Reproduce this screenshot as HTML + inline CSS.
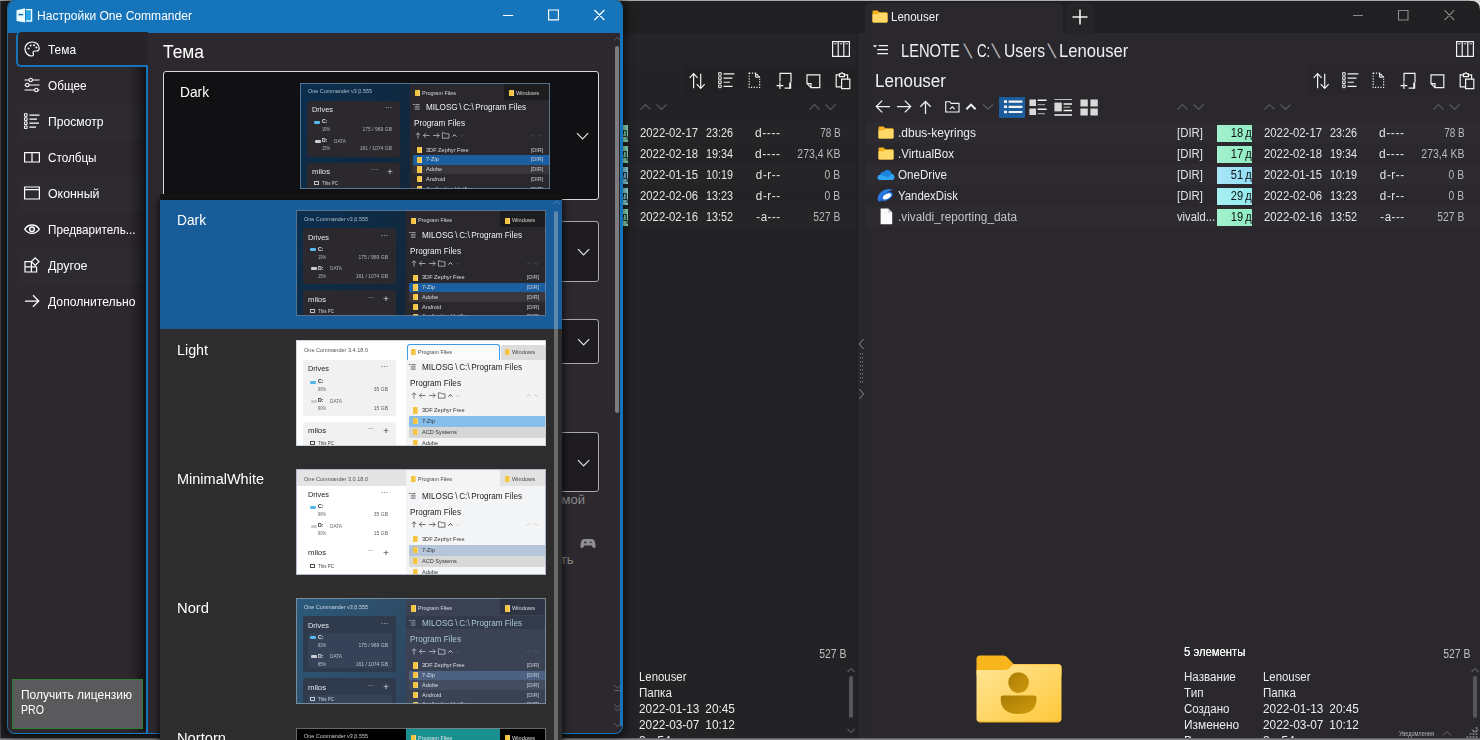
<!DOCTYPE html>
<html lang="ru"><head><meta charset="utf-8"><title>Настройки One Commander</title>
<style>
html,body{margin:0;padding:0;background:#201f21;}
body{width:1480px;height:740px;overflow:hidden;position:relative;font-family:"Liberation Sans", sans-serif;}
.b{position:absolute;box-sizing:border-box;}
.t{position:absolute;white-space:nowrap;display:inline-block;}
.layer{position:absolute;left:0;top:0;width:1480px;height:740px;overflow:hidden;}
.th{position:absolute;overflow:hidden;box-sizing:border-box;width:250px;height:106px;font-size:6px;}
.th .t{filter:blur(0.3px);}
.t i{font-style:normal;color:#a8a7ab;}
</style></head>
<body>
<div class="layer" id="main"><div class="b" style="left:0px;top:0px;width:1480px;height:740px;background:#201f21;"></div><div class="b" style="left:0px;top:0px;width:1px;height:740px;background:#454347;"></div><div class="b" style="left:622px;top:0;width:236px;height:740px;overflow:hidden;"><div class="b" style="left:-622px;top:0;width:1480px;height:740px;"><div class="b" style="left:241.5px;top:33px;width:614.5px;height:706px;background:#232225;"></div><div class="b" style="left:241.5px;top:33px;width:614.5px;height:32px;background:#252428;"></div><svg class="b" style="left:248px;top:44px;" width="18" height="12" viewBox="0 0 18 12" fill="none"><path d="M0.8 1.2 H5.2 L3 3.6Z" fill="#f2f2f2"/><path d="M6.6 1.6 H16 M5.2 5.6 H16 M5.2 9.6 H16" stroke="#f2f2f2" stroke-width="1.15"/></svg><span class="t" id="t0" style="top:37.5px;font-size:19px;line-height:25px;color:#f0f0f0;left:277.4px;transform-origin:0 50%;transform:scaleX(0.7734);">LENOTE</span><span class="t" id="t1" style="top:38.4px;font-size:20px;line-height:26px;color:#b4b3b7;left:341.20000000000005px;transform-origin:0 50%;transform:skewX(15deg);">\</span><span class="t" id="t2" style="top:37.5px;font-size:19px;line-height:25px;color:#f0f0f0;left:352.6px;transform-origin:0 50%;transform:scaleX(0.7000);">C:</span><span class="t" id="t3" style="top:38.4px;font-size:20px;line-height:26px;color:#b4b3b7;left:368.79999999999995px;transform-origin:0 50%;transform:skewX(15deg);">\</span><span class="t" id="t4" style="top:37.5px;font-size:19px;line-height:25px;color:#f0f0f0;left:380px;transform-origin:0 50%;transform:scaleX(0.8262);">Users</span><span class="t" id="t5" style="top:38.4px;font-size:20px;line-height:26px;color:#b4b3b7;left:425.20000000000005px;transform-origin:0 50%;transform:skewX(15deg);">\</span><span class="t" id="t6" style="top:37.5px;font-size:19px;line-height:25px;color:#f0f0f0;left:434.70000000000005px;transform-origin:0 50%;transform:scaleX(0.8746);">Lenouser</span><svg class="b" style="left:832px;top:41px;" width="18" height="16" viewBox="0 0 18 16" fill="none"><rect x="0.6" y="0.6" width="16.8" height="14.8" stroke="#f2f2f2" stroke-width="1.2"/><path d="M6.2 0.6 V15.4 M11.8 0.6 V15.4" stroke="#f2f2f2" stroke-width="1.2"/><path d="M2.2 2.8 H4.6 M7.8 2.8 H10.2 M13.4 2.8 H15.8" stroke="#f2f2f2" stroke-width="0.9"/></svg><span class="t" id="t7" style="top:69.5px;font-size:18px;line-height:23px;color:#f0f0f0;left:251px;transform-origin:0 50%;transform:scaleX(0.9459);">Lenouser</span><div class="b" style="left:684px;top:66px;width:172px;height:28px;background:#212023;"></div><svg class="b" style="left:688px;top:72px;" width="18" height="18" viewBox="0 0 18 18" fill="none"><path d="M5.6 16.2 V1.6 M1.6 5.8 L5.6 1.6 L9.6 5.8 M12.7 1.8 V16.4 M8.7 12.2 L12.7 16.4 L16.7 12.2" stroke="#f2f2f2" stroke-width="1.2"/></svg><svg class="b" style="left:717.5px;top:72.2px;" width="18" height="17" viewBox="0 0 18 17" fill="none"><path d="M0.6 0.6h2.6v2.6h-2.6z M0.6 4.75h2.6v2.6h-2.6z M0.6 8.9h2.6v2.6h-2.6z M0.6 13.05h2.6v2.6h-2.6z" stroke="#f2f2f2" stroke-width="0.95"/><path d="M5.6 1.9 H16.4 M5.6 6.05 H14.5 M5.6 10.2 H12 M5.6 14.35 H14.5" stroke="#f2f2f2" stroke-width="1.15"/></svg><svg class="b" style="left:748.4000000000001px;top:72px;" width="14" height="17" viewBox="0 0 14 17" fill="none"><path d="M1.2 1.2 H7.6 L11.6 5.2 V15.4 H1.2Z" stroke="#f2f2f2" stroke-width="1.2" stroke-dasharray="1.2 1.5"/><path d="M7.6 1.2 V5.2 H11.6Z" stroke="#f2f2f2" stroke-width="1" fill="#f2f2f2" fill-opacity="0.25"/></svg><svg class="b" style="left:775.5999999999999px;top:72px;" width="17" height="18" viewBox="0 0 17 18" fill="none"><path d="M4 9.6 V1.3 H15 V10.6 M15 16.2 H8.6" stroke="#f2f2f2" stroke-width="1.2"/><path d="M14.2 10.6 V16.4" stroke="#f2f2f2" stroke-width="2"/><path d="M0.5 13.7 H7.3 M3.9 10.3 V17.1" stroke="#f2f2f2" stroke-width="1.2"/></svg><svg class="b" style="left:805.5px;top:73.5px;" width="15" height="15" viewBox="0 0 15 15" fill="none"><path d="M1 0.8 H13.8 V13.6 H5 L1 9.6Z M1 9.6 H5 V13.6" stroke="#f2f2f2" stroke-width="1.2"/></svg><svg class="b" style="left:834.5px;top:72px;" width="16" height="18" viewBox="0 0 16 18" fill="none"><path d="M4.4 2.8 H1.2 V14.8 H6.6 M9.4 2.8 H12.6 V6.4 M4.4 4.6 V1.8 H5.6 Q6.9 0 8.2 1.8 H9.4 V4.6Z M6.6 7.2 H14.8 V16.6 H6.6Z" stroke="#f2f2f2" stroke-width="1.2"/></svg><svg class="b" style="left:251px;top:99px;" width="16" height="15" viewBox="0 0 16 15" fill="none"><path d="M15 7.5 H1.4 M7.2 1.6 L1.3 7.5 L7.2 13.4" stroke="#f2f2f2" stroke-width="1.25"/></svg><svg class="b" style="left:272px;top:99px;" width="16" height="15" viewBox="0 0 16 15" fill="none"><path d="M1 7.5 H14.6 M8.8 1.6 L14.7 7.5 L8.8 13.4" stroke="#f2f2f2" stroke-width="1.25"/></svg><svg class="b" style="left:295px;top:100px;" width="13" height="15" viewBox="0 0 13 15" fill="none"><path d="M6.5 14 V1.6 M1.3 6.8 L6.5 1.5 L11.7 6.8" stroke="#f2f2f2" stroke-width="1.25"/></svg><svg class="b" style="left:320.6px;top:100.6px;" width="15" height="12" viewBox="0 0 15 12" fill="none"><path d="M0.7 0.7 H4.8 L6.2 2.4 H14 V11 H0.7Z" stroke="#f2f2f2" stroke-width="1.15"/><path d="M4.9 8.2 L7.3 5.8 L9.7 8.2" stroke="#f2f2f2" stroke-width="1.15"/></svg><svg class="b" style="left:341px;top:102px;" width="12" height="9" viewBox="0 0 12 9" fill="none"><path d="M1.4 7.2 L6 2.6 L10.6 7.2" stroke="#f2f2f2" stroke-width="2"/></svg><svg class="b" style="left:358px;top:102px;" width="12" height="9" viewBox="0 0 12 9" fill="none"><path d="M1 2.4 L6 7.2 L11 2.4" stroke="#5c5b5f" stroke-width="1.3"/></svg><div class="b" style="left:374.6px;top:97.4px;width:26.6px;height:20.4px;background:#1c5c9c;"></div><svg class="b" style="left:379.6px;top:100.3px;" width="19" height="14" viewBox="0 0 19 14" fill="none"><path d="M0 0.3h3v2.6h-3z M0 5.5h3v2.6h-3z M0 10.7h3v2.6h-3z" fill="#f2f2f2"/><path d="M4.6 1.6 H18.4 M4.6 6.8 H18.4 M4.6 12 H18.4" stroke="#f2f2f2" stroke-width="2.2"/></svg><svg class="b" style="left:405px;top:99px;" width="18" height="17" viewBox="0 0 18 17" fill="none"><path d="M0.4 0.4h6.6v6.6h-6.6z M0.4 9.4h6.6v6.6h-6.6z" fill="#d9d9d9"/><path d="M8.6 1.3 H17.6 M8.6 10.3 H17.6" stroke="#f2f2f2" stroke-width="1.6"/><path d="M8.6 5.6 H16 M8.6 14.6 H16" stroke="#9a9a9a" stroke-width="1.4"/></svg><svg class="b" style="left:430px;top:99px;" width="19" height="17" viewBox="0 0 19 17" fill="none"><path d="M0.4 0 H18 M0.4 16 H18" stroke="#f2f2f2" stroke-width="1.6"/><path d="M0.4 3.6h7.4v8.8h-7.4z" fill="#d9d9d9"/><path d="M9.6 5 H18 M9.6 11.4 H18" stroke="#f2f2f2" stroke-width="1.5"/><path d="M9.6 8.2 H16.4" stroke="#9a9a9a" stroke-width="1.4"/></svg><svg class="b" style="left:456px;top:99px;" width="19" height="17" viewBox="0 0 19 17" fill="none"><path d="M0.4 0.4h7.4v7h-7.4z M10.4 0.4h7.4v7h-7.4z M0.4 9.4h7.4v7h-7.4z M10.4 9.4h7.4v7h-7.4z" fill="#d9d9d9"/></svg><svg class="b" style="left:553px;top:103px;" width="28" height="8" viewBox="0 0 28 8" fill="none"><path d="M0.5 6.5 L5.5 1.5 L10.5 6.5 M16.5 1.5 L21.5 6.5 L26.5 1.5" stroke="#58575b" stroke-width="1.2"/></svg><svg class="b" style="left:640px;top:103px;" width="28" height="8" viewBox="0 0 28 8" fill="none"><path d="M0.5 6.5 L5.5 1.5 L10.5 6.5 M16.5 1.5 L21.5 6.5 L26.5 1.5" stroke="#58575b" stroke-width="1.2"/></svg><svg class="b" style="left:809px;top:103px;" width="28" height="8" viewBox="0 0 28 8" fill="none"><path d="M0.5 6.5 L5.5 1.5 L10.5 6.5 M16.5 1.5 L21.5 6.5 L26.5 1.5" stroke="#58575b" stroke-width="1.2"/></svg><div class="b" style="left:241.5px;top:122px;width:614.5px;height:21px;background:#252427;"></div><svg class="b" style="left:254px;top:126px;" width="16" height="13" viewBox="0 0 16 13" fill="none"><path d="M0.5 1.6 Q0.5 0.5 1.6 0.5 H5.6 L7.4 2.3 H14.4 Q15.5 2.3 15.5 3.4 V11.4 Q15.5 12.5 14.4 12.5 H1.6 Q0.5 12.5 0.5 11.4Z" fill="#f3b21d"/><path d="M0.5 4.2 H5.8 L7.2 3 H14.4 Q15.5 3 15.5 4.1 V11.4 Q15.5 12.5 14.4 12.5 H1.6 Q0.5 12.5 0.5 11.4Z" fill="#ffd968"/></svg><span class="t" id="t8" style="top:124.5px;font-size:12.5px;line-height:16px;color:#ececec;left:274px;transform-origin:0 50%;transform:scaleX(0.9594);">.dbus-keyrings</span><span class="t" id="t9" style="top:124.5px;font-size:12px;line-height:16px;color:#e2e2e2;left:553px;transform-origin:0 50%;transform:scaleX(0.9509);">[DIR]</span><div class="b" style="left:593px;top:125px;width:35px;height:17px;background:#93eec5;background-image:linear-gradient(90deg,rgba(255,255,255,.16),rgba(255,255,255,0) 70%);"></div><span class="t" id="t10" style="top:125.0px;font-size:12px;line-height:16px;color:#101010;right:calc(100% - 627.5px);transform-origin:100% 50%;transform:scaleX(0.9224);">18&thinsp;д</span><span class="t" id="t11" style="top:124.5px;font-size:12px;line-height:16px;color:#e4e4e4;left:640px;transform-origin:0 50%;transform:scaleX(0.9448);">2022-02-17</span><span class="t" id="t12" style="top:124.5px;font-size:12px;line-height:16px;color:#e4e4e4;left:706px;transform-origin:0 50%;transform:scaleX(0.8991);">23:26</span><span class="t" id="t13" style="top:124.5px;font-size:12px;line-height:16px;color:#e4e4e4;right:calc(100% - 780.5px);transform-origin:100% 50%;letter-spacing:0.6px;transform:scaleX(1.0011);">d----</span><span class="t" id="t14" style="top:124.5px;font-size:12px;line-height:16px;color:#b9b9bb;right:calc(100% - 840.5px);transform-origin:100% 50%;transform:scaleX(0.8304);">78 B</span><div class="b" style="left:241.5px;top:143px;width:614.5px;height:21px;background:#232225;"></div><svg class="b" style="left:254px;top:147px;" width="16" height="13" viewBox="0 0 16 13" fill="none"><path d="M0.5 1.6 Q0.5 0.5 1.6 0.5 H5.6 L7.4 2.3 H14.4 Q15.5 2.3 15.5 3.4 V11.4 Q15.5 12.5 14.4 12.5 H1.6 Q0.5 12.5 0.5 11.4Z" fill="#f3b21d"/><path d="M0.5 4.2 H5.8 L7.2 3 H14.4 Q15.5 3 15.5 4.1 V11.4 Q15.5 12.5 14.4 12.5 H1.6 Q0.5 12.5 0.5 11.4Z" fill="#ffd968"/></svg><span class="t" id="t15" style="top:145.5px;font-size:12.5px;line-height:16px;color:#ececec;left:274px;transform-origin:0 50%;transform:scaleX(0.9299);">.VirtualBox</span><span class="t" id="t16" style="top:145.5px;font-size:12px;line-height:16px;color:#e2e2e2;left:553px;transform-origin:0 50%;transform:scaleX(0.9509);">[DIR]</span><div class="b" style="left:593px;top:146px;width:35px;height:17px;background:#93eec5;background-image:linear-gradient(90deg,rgba(255,255,255,.16),rgba(255,255,255,0) 70%);"></div><span class="t" id="t17" style="top:146.0px;font-size:12px;line-height:16px;color:#101010;right:calc(100% - 627.5px);transform-origin:100% 50%;transform:scaleX(0.9224);">17&thinsp;д</span><span class="t" id="t18" style="top:145.5px;font-size:12px;line-height:16px;color:#e4e4e4;left:640px;transform-origin:0 50%;transform:scaleX(0.9448);">2022-02-18</span><span class="t" id="t19" style="top:145.5px;font-size:12px;line-height:16px;color:#e4e4e4;left:706px;transform-origin:0 50%;transform:scaleX(0.8991);">19:34</span><span class="t" id="t20" style="top:145.5px;font-size:12px;line-height:16px;color:#e4e4e4;right:calc(100% - 780.5px);transform-origin:100% 50%;letter-spacing:0.6px;transform:scaleX(1.0011);">d----</span><span class="t" id="t21" style="top:145.5px;font-size:12px;line-height:16px;color:#b9b9bb;right:calc(100% - 840.5px);transform-origin:100% 50%;transform:scaleX(0.8709);">273,4 KB</span><div class="b" style="left:241.5px;top:164px;width:614.5px;height:21px;background:#252427;"></div><svg class="b" style="left:253px;top:168px;" width="18" height="13" viewBox="0 0 18 13" fill="none"><path d="M3.6 12 Q0.4 12 0.6 9.2 Q0.8 7 3.2 6.8 Q4.2 3.4 7.4 3.6 Q9 1 12 2.2 Q14.4 3.2 14.6 6 Q17.4 6.4 17.4 9.2 Q17.2 12 14.4 12Z" fill="#1b86e0"/><path d="M3.6 12 Q0.4 12 0.6 9.2 Q0.8 7.2 3.2 6.8 L11 9.4 L14.6 6 Q17.4 6.4 17.4 9.2 Q17.2 12 14.4 12Z" fill="#2fa4f2"/></svg><span class="t" id="t22" style="top:166.5px;font-size:12.5px;line-height:16px;color:#ececec;left:274px;transform-origin:0 50%;transform:scaleX(0.9281);">OneDrive</span><span class="t" id="t23" style="top:166.5px;font-size:12px;line-height:16px;color:#e2e2e2;left:553px;transform-origin:0 50%;transform:scaleX(0.9509);">[DIR]</span><div class="b" style="left:593px;top:167px;width:35px;height:17px;background:#98e0f6;background-image:linear-gradient(90deg,rgba(255,255,255,.16),rgba(255,255,255,0) 70%);"></div><span class="t" id="t24" style="top:167.0px;font-size:12px;line-height:16px;color:#101010;right:calc(100% - 627.5px);transform-origin:100% 50%;transform:scaleX(0.9224);">51&thinsp;д</span><span class="t" id="t25" style="top:166.5px;font-size:12px;line-height:16px;color:#e4e4e4;left:640px;transform-origin:0 50%;transform:scaleX(0.9448);">2022-01-15</span><span class="t" id="t26" style="top:166.5px;font-size:12px;line-height:16px;color:#e4e4e4;left:706px;transform-origin:0 50%;transform:scaleX(0.8991);">10:19</span><span class="t" id="t27" style="top:166.5px;font-size:12px;line-height:16px;color:#e4e4e4;right:calc(100% - 780.5px);transform-origin:100% 50%;letter-spacing:0.6px;transform:scaleX(0.9660);">d-r--</span><span class="t" id="t28" style="top:166.5px;font-size:12px;line-height:16px;color:#b9b9bb;right:calc(100% - 840.5px);transform-origin:100% 50%;transform:scaleX(0.8604);">0 B</span><div class="b" style="left:241.5px;top:185px;width:614.5px;height:21px;background:#232225;"></div><svg class="b" style="left:253px;top:188px;" width="18" height="15" viewBox="0 0 18 15" fill="none"><path d="M0.6 11 Q1 5 7 2 Q13 -0.4 17 2.6 Q14 1.6 11 4 Q4 9 3.4 14 Q0.6 13.4 0.6 11Z" fill="#2a7be0"/><ellipse cx="9.6" cy="8.6" rx="6.8" ry="3.6" transform="rotate(-28 9.6 8.6)" fill="#1f6fe0"/><ellipse cx="10" cy="8.4" rx="4.6" ry="2.3" transform="rotate(-28 10 8.4)" fill="#ffffff"/></svg><span class="t" id="t29" style="top:187.5px;font-size:12.5px;line-height:16px;color:#ececec;left:274px;transform-origin:0 50%;transform:scaleX(0.9121);">YandexDisk</span><span class="t" id="t30" style="top:187.5px;font-size:12px;line-height:16px;color:#e2e2e2;left:553px;transform-origin:0 50%;transform:scaleX(0.9509);">[DIR]</span><div class="b" style="left:593px;top:188px;width:35px;height:17px;background:#98ecf0;background-image:linear-gradient(90deg,rgba(255,255,255,.16),rgba(255,255,255,0) 70%);"></div><span class="t" id="t31" style="top:188.0px;font-size:12px;line-height:16px;color:#101010;right:calc(100% - 627.5px);transform-origin:100% 50%;transform:scaleX(0.9224);">29&thinsp;д</span><span class="t" id="t32" style="top:187.5px;font-size:12px;line-height:16px;color:#e4e4e4;left:640px;transform-origin:0 50%;transform:scaleX(0.9448);">2022-02-06</span><span class="t" id="t33" style="top:187.5px;font-size:12px;line-height:16px;color:#e4e4e4;left:706px;transform-origin:0 50%;transform:scaleX(0.8991);">13:23</span><span class="t" id="t34" style="top:187.5px;font-size:12px;line-height:16px;color:#e4e4e4;right:calc(100% - 780.5px);transform-origin:100% 50%;letter-spacing:0.6px;transform:scaleX(0.9660);">d-r--</span><span class="t" id="t35" style="top:187.5px;font-size:12px;line-height:16px;color:#b9b9bb;right:calc(100% - 840.5px);transform-origin:100% 50%;transform:scaleX(0.8604);">0 B</span><div class="b" style="left:241.5px;top:206px;width:614.5px;height:21px;background:#252427;"></div><svg class="b" style="left:256px;top:208px;" width="13" height="17" viewBox="0 0 13 17" fill="none"><path d="M0.6 0.6 H8.2 L12.2 4.6 V16.2 H0.6Z" fill="#fafafa"/><path d="M8.2 0.6 V4.6 H12.2Z" fill="#cfcfcf"/></svg><span class="t" id="t36" style="top:208.5px;font-size:12.5px;line-height:16px;color:#c4c4c6;left:274px;transform-origin:0 50%;transform:scaleX(0.9461);">.vivaldi_reporting_data</span><span class="t" id="t37" style="top:208.5px;font-size:12px;line-height:16px;color:#e2e2e2;left:553px;transform-origin:0 50%;transform:scaleX(0.9339);">vivald...</span><div class="b" style="left:593px;top:209px;width:35px;height:17px;background:#93eec5;background-image:linear-gradient(90deg,rgba(255,255,255,.16),rgba(255,255,255,0) 70%);"></div><span class="t" id="t38" style="top:209.0px;font-size:12px;line-height:16px;color:#101010;right:calc(100% - 627.5px);transform-origin:100% 50%;transform:scaleX(0.9224);">19&thinsp;д</span><span class="t" id="t39" style="top:208.5px;font-size:12px;line-height:16px;color:#e4e4e4;left:640px;transform-origin:0 50%;transform:scaleX(0.9448);">2022-02-16</span><span class="t" id="t40" style="top:208.5px;font-size:12px;line-height:16px;color:#e4e4e4;left:706px;transform-origin:0 50%;transform:scaleX(0.8991);">13:52</span><span class="t" id="t41" style="top:208.5px;font-size:12px;line-height:16px;color:#e4e4e4;right:calc(100% - 780.5px);transform-origin:100% 50%;letter-spacing:0.6px;transform:scaleX(0.9505);">-a---</span><span class="t" id="t42" style="top:208.5px;font-size:12px;line-height:16px;color:#b9b9bb;right:calc(100% - 840.5px);transform-origin:100% 50%;transform:scaleX(0.8610);">527 B</span><span class="t" id="t43" style="top:643.6px;font-size:12px;line-height:16px;color:#f6f6f6;left:559.5999999999999px;transform-origin:0 50%;text-shadow:0 0 0.4px #fff;transform:scaleX(0.9414);">5 элементы</span><span class="t" id="t44" style="top:645.6px;font-size:12px;line-height:16px;color:#c0c0c2;right:calc(100% - 846.5999999999999px);transform-origin:100% 50%;transform:scaleX(0.8674);">527 B</span><span class="t" id="t45" style="top:669.1px;font-size:12px;line-height:16px;color:#ececec;left:559.5999999999999px;transform-origin:0 50%;transform:scaleX(0.9660);">Название</span><span class="t" id="t46" style="top:669.1px;font-size:12px;line-height:16px;color:#ececec;left:639.2px;transform-origin:0 50%;transform:scaleX(0.9491);">Lenouser</span><span class="t" id="t47" style="top:685.1px;font-size:12px;line-height:16px;color:#ececec;left:559.5999999999999px;transform-origin:0 50%;transform:scaleX(0.9742);">Тип</span><span class="t" id="t48" style="top:685.1px;font-size:12px;line-height:16px;color:#ececec;left:639.2px;transform-origin:0 50%;transform:scaleX(0.9681);">Папка</span><span class="t" id="t49" style="top:701.1px;font-size:12px;line-height:16px;color:#ececec;left:559.5999999999999px;transform-origin:0 50%;transform:scaleX(0.9595);">Создано</span><span class="t" id="t50" style="top:701.1px;font-size:12px;line-height:16px;color:#ececec;left:639.2px;transform-origin:0 50%;transform:scaleX(0.9844);">2022-01-13&ensp;20:45</span><span class="t" id="t51" style="top:717.1px;font-size:12px;line-height:16px;color:#ececec;left:559.5999999999999px;transform-origin:0 50%;transform:scaleX(0.9900);">Изменено</span><span class="t" id="t52" style="top:717.1px;font-size:12px;line-height:16px;color:#ececec;left:639.2px;transform-origin:0 50%;transform:scaleX(0.9844);">2022-03-07&ensp;10:12</span><span class="t" id="t53" style="top:733.1px;font-size:12px;line-height:16px;color:#ececec;left:559.5999999999999px;transform-origin:0 50%;transform:scaleX(0.9939);">Размер</span><span class="t" id="t54" style="top:733.1px;font-size:12px;line-height:16px;color:#ececec;left:639.2px;transform-origin:0 50%;transform:scaleX(1.0380);">3&thinsp;x&thinsp;54</span><svg class="b" style="left:352px;top:655px;" width="86" height="68" viewBox="0 0 86 68" fill="none"><defs><linearGradient id="fg0" x1="0" y1="0" x2="1" y2="1"><stop offset="0" stop-color="#ffe596"/><stop offset="1" stop-color="#ffc83a"/></linearGradient><linearGradient id="pg0" x1="0" y1="0" x2="1" y2="1"><stop offset="0" stop-color="#a97c08"/><stop offset="1" stop-color="#cf9a0a"/></linearGradient></defs>
<path d="M0.5 4 Q0.5 0.5 4 0.5 H27.5 Q29.6 0.5 31 2 L38 9.6 H0.5Z M0.5 9 H82 Q85.5 9 85.5 12.5 V20 H0.5Z" fill="#f8b61c"/>
<path d="M0.5 15 H29 Q31.6 15 33.4 13.2 L37 9.6 H82 Q85.5 9.6 85.5 13 V63.5 Q85.5 67 82 67 H4 Q0.5 67 0.5 63.5Z" fill="url(#fg0)"/>
<path d="M3 67 H83" stroke="#f0a91a" stroke-width="1.2"/>
<circle cx="42.6" cy="27.6" r="10.4" fill="url(#pg0)"/>
<path d="M24.6 43 Q24.6 40.6 27 40.6 H58.2 Q60.6 40.6 60.6 43 Q60.6 59 42.6 59 Q24.6 59 24.6 43Z" fill="url(#pg0)"/></svg><svg class="b" style="left:846px;top:666px;" width="10" height="8" viewBox="0 0 10 8" fill="none"><path d="M1.5 6 L5 2.5 L8.5 6" stroke="#5a595d" stroke-width="1.1"/></svg><div class="b" style="left:849px;top:676px;width:4px;height:42px;background:#56555a;border-radius:2px;"></div><svg class="b" style="left:846px;top:727px;" width="10" height="8" viewBox="0 0 10 8" fill="none"><path d="M1.5 2 L5 5.5 L8.5 2" stroke="#5a595d" stroke-width="1.1"/></svg></div></div><div class="b" style="left:858px;top:33px;width:8px;height:706px;background:#28272a;"></div><svg class="b" style="left:858px;top:338px;" width="7" height="62" viewBox="0 0 7 62" fill="none"><path d="M5.6 1 L1.4 6 L5.6 11 M1.4 51 L5.6 56 L1.4 61" stroke="#8a8a8c" stroke-width="1"/><path d="M2.5 15 V45 M4.5 15 V45" stroke="#6c6b6e" stroke-width="1" stroke-dasharray="1.6 2.4"/></svg><div class="b" style="left:865.5px;top:33px;width:614.5px;height:706px;background:#2b282d;"></div><div class="b" style="left:865.5px;top:33px;width:614.5px;height:32px;background:#2b282d;"></div><div class="b" style="left:865px;top:2.5px;width:198px;height:31px;background:#2b282d;border-radius:5px 5px 0 0;"></div><svg class="b" style="left:872px;top:10px;" width="16" height="13" viewBox="0 0 16 13" fill="none"><path d="M0.5 1.6 Q0.5 0.5 1.6 0.5 H5.6 L7.4 2.3 H14.4 Q15.5 2.3 15.5 3.4 V11.4 Q15.5 12.5 14.4 12.5 H1.6 Q0.5 12.5 0.5 11.4Z" fill="#f3b21d"/><path d="M0.5 4.2 H5.8 L7.2 3 H14.4 Q15.5 3 15.5 4.1 V11.4 Q15.5 12.5 14.4 12.5 H1.6 Q0.5 12.5 0.5 11.4Z" fill="#ffd968"/></svg><span class="t" id="t55" style="top:7.8px;font-size:13px;line-height:17px;color:#f0f0f0;left:891px;transform-origin:0 50%;transform:scaleX(0.8853);">Lenouser</span><div class="b" style="left:1066px;top:3px;width:28px;height:30px;background:#252427;border-radius:4px 4px 0 0;"></div><svg class="b" style="left:1072px;top:9px;" width="16" height="16" viewBox="0 0 16 16" fill="none"><path d="M8 0.5 V15.5 M0.5 8 H15.5" stroke="#f2f2f2" stroke-width="1.6"/></svg><svg class="b" style="left:872px;top:44px;" width="18" height="12" viewBox="0 0 18 12" fill="none"><path d="M0.8 1.2 H5.2 L3 3.6Z" fill="#f2f2f2"/><path d="M6.6 1.6 H16 M5.2 5.6 H16 M5.2 9.6 H16" stroke="#f2f2f2" stroke-width="1.15"/></svg><span class="t" id="t56" style="top:37.5px;font-size:19px;line-height:25px;color:#f0f0f0;left:901.4px;transform-origin:0 50%;transform:scaleX(0.7734);">LENOTE</span><span class="t" id="t57" style="top:38.4px;font-size:20px;line-height:26px;color:#b4b3b7;left:965.2px;transform-origin:0 50%;transform:skewX(15deg);">\</span><span class="t" id="t58" style="top:37.5px;font-size:19px;line-height:25px;color:#f0f0f0;left:976.6px;transform-origin:0 50%;transform:scaleX(0.7000);">C:</span><span class="t" id="t59" style="top:38.4px;font-size:20px;line-height:26px;color:#b4b3b7;left:992.8px;transform-origin:0 50%;transform:skewX(15deg);">\</span><span class="t" id="t60" style="top:37.5px;font-size:19px;line-height:25px;color:#f0f0f0;left:1004px;transform-origin:0 50%;transform:scaleX(0.8262);">Users</span><span class="t" id="t61" style="top:38.4px;font-size:20px;line-height:26px;color:#b4b3b7;left:1049.2px;transform-origin:0 50%;transform:skewX(15deg);">\</span><span class="t" id="t62" style="top:37.5px;font-size:19px;line-height:25px;color:#f0f0f0;left:1058.7px;transform-origin:0 50%;transform:scaleX(0.8746);">Lenouser</span><svg class="b" style="left:1456px;top:41px;" width="18" height="16" viewBox="0 0 18 16" fill="none"><rect x="0.6" y="0.6" width="16.8" height="14.8" stroke="#f2f2f2" stroke-width="1.2"/><path d="M6.2 0.6 V15.4 M11.8 0.6 V15.4" stroke="#f2f2f2" stroke-width="1.2"/><path d="M2.2 2.8 H4.6 M7.8 2.8 H10.2 M13.4 2.8 H15.8" stroke="#f2f2f2" stroke-width="0.9"/></svg><span class="t" id="t63" style="top:69.5px;font-size:18px;line-height:23px;color:#f0f0f0;left:875px;transform-origin:0 50%;transform:scaleX(0.9459);">Lenouser</span><div class="b" style="left:1308px;top:66px;width:172px;height:28px;background:#29262b;"></div><svg class="b" style="left:1312px;top:72px;" width="18" height="18" viewBox="0 0 18 18" fill="none"><path d="M5.6 16.2 V1.6 M1.6 5.8 L5.6 1.6 L9.6 5.8 M12.7 1.8 V16.4 M8.7 12.2 L12.7 16.4 L16.7 12.2" stroke="#f2f2f2" stroke-width="1.2"/></svg><svg class="b" style="left:1341.5px;top:72.2px;" width="18" height="17" viewBox="0 0 18 17" fill="none"><path d="M0.6 0.6h2.6v2.6h-2.6z M0.6 4.75h2.6v2.6h-2.6z M0.6 8.9h2.6v2.6h-2.6z M0.6 13.05h2.6v2.6h-2.6z" stroke="#f2f2f2" stroke-width="0.95"/><path d="M5.6 1.9 H16.4 M5.6 6.05 H14.5 M5.6 10.2 H12 M5.6 14.35 H14.5" stroke="#f2f2f2" stroke-width="1.15"/></svg><svg class="b" style="left:1372.4px;top:72px;" width="14" height="17" viewBox="0 0 14 17" fill="none"><path d="M1.2 1.2 H7.6 L11.6 5.2 V15.4 H1.2Z" stroke="#f2f2f2" stroke-width="1.2" stroke-dasharray="1.2 1.5"/><path d="M7.6 1.2 V5.2 H11.6Z" stroke="#f2f2f2" stroke-width="1" fill="#f2f2f2" fill-opacity="0.25"/></svg><svg class="b" style="left:1399.6px;top:72px;" width="17" height="18" viewBox="0 0 17 18" fill="none"><path d="M4 9.6 V1.3 H15 V10.6 M15 16.2 H8.6" stroke="#f2f2f2" stroke-width="1.2"/><path d="M14.2 10.6 V16.4" stroke="#f2f2f2" stroke-width="2"/><path d="M0.5 13.7 H7.3 M3.9 10.3 V17.1" stroke="#f2f2f2" stroke-width="1.2"/></svg><svg class="b" style="left:1429.5px;top:73.5px;" width="15" height="15" viewBox="0 0 15 15" fill="none"><path d="M1 0.8 H13.8 V13.6 H5 L1 9.6Z M1 9.6 H5 V13.6" stroke="#f2f2f2" stroke-width="1.2"/></svg><svg class="b" style="left:1458.5px;top:72px;" width="16" height="18" viewBox="0 0 16 18" fill="none"><path d="M4.4 2.8 H1.2 V14.8 H6.6 M9.4 2.8 H12.6 V6.4 M4.4 4.6 V1.8 H5.6 Q6.9 0 8.2 1.8 H9.4 V4.6Z M6.6 7.2 H14.8 V16.6 H6.6Z" stroke="#f2f2f2" stroke-width="1.2"/></svg><svg class="b" style="left:875px;top:99px;" width="16" height="15" viewBox="0 0 16 15" fill="none"><path d="M15 7.5 H1.4 M7.2 1.6 L1.3 7.5 L7.2 13.4" stroke="#f2f2f2" stroke-width="1.25"/></svg><svg class="b" style="left:896px;top:99px;" width="16" height="15" viewBox="0 0 16 15" fill="none"><path d="M1 7.5 H14.6 M8.8 1.6 L14.7 7.5 L8.8 13.4" stroke="#f2f2f2" stroke-width="1.25"/></svg><svg class="b" style="left:919px;top:100px;" width="13" height="15" viewBox="0 0 13 15" fill="none"><path d="M6.5 14 V1.6 M1.3 6.8 L6.5 1.5 L11.7 6.8" stroke="#f2f2f2" stroke-width="1.25"/></svg><svg class="b" style="left:944.6px;top:100.6px;" width="15" height="12" viewBox="0 0 15 12" fill="none"><path d="M0.7 0.7 H4.8 L6.2 2.4 H14 V11 H0.7Z" stroke="#f2f2f2" stroke-width="1.15"/><path d="M4.9 8.2 L7.3 5.8 L9.7 8.2" stroke="#f2f2f2" stroke-width="1.15"/></svg><svg class="b" style="left:965px;top:102px;" width="12" height="9" viewBox="0 0 12 9" fill="none"><path d="M1.4 7.2 L6 2.6 L10.6 7.2" stroke="#f2f2f2" stroke-width="2"/></svg><svg class="b" style="left:982px;top:102px;" width="12" height="9" viewBox="0 0 12 9" fill="none"><path d="M1 2.4 L6 7.2 L11 2.4" stroke="#5c5b5f" stroke-width="1.3"/></svg><div class="b" style="left:998.6px;top:97.4px;width:26.6px;height:20.4px;background:#1c5c9c;"></div><svg class="b" style="left:1003.6px;top:100.3px;" width="19" height="14" viewBox="0 0 19 14" fill="none"><path d="M0 0.3h3v2.6h-3z M0 5.5h3v2.6h-3z M0 10.7h3v2.6h-3z" fill="#f2f2f2"/><path d="M4.6 1.6 H18.4 M4.6 6.8 H18.4 M4.6 12 H18.4" stroke="#f2f2f2" stroke-width="2.2"/></svg><svg class="b" style="left:1029px;top:99px;" width="18" height="17" viewBox="0 0 18 17" fill="none"><path d="M0.4 0.4h6.6v6.6h-6.6z M0.4 9.4h6.6v6.6h-6.6z" fill="#d9d9d9"/><path d="M8.6 1.3 H17.6 M8.6 10.3 H17.6" stroke="#f2f2f2" stroke-width="1.6"/><path d="M8.6 5.6 H16 M8.6 14.6 H16" stroke="#9a9a9a" stroke-width="1.4"/></svg><svg class="b" style="left:1054px;top:99px;" width="19" height="17" viewBox="0 0 19 17" fill="none"><path d="M0.4 0 H18 M0.4 16 H18" stroke="#f2f2f2" stroke-width="1.6"/><path d="M0.4 3.6h7.4v8.8h-7.4z" fill="#d9d9d9"/><path d="M9.6 5 H18 M9.6 11.4 H18" stroke="#f2f2f2" stroke-width="1.5"/><path d="M9.6 8.2 H16.4" stroke="#9a9a9a" stroke-width="1.4"/></svg><svg class="b" style="left:1080px;top:99px;" width="19" height="17" viewBox="0 0 19 17" fill="none"><path d="M0.4 0.4h7.4v7h-7.4z M10.4 0.4h7.4v7h-7.4z M0.4 9.4h7.4v7h-7.4z M10.4 9.4h7.4v7h-7.4z" fill="#d9d9d9"/></svg><svg class="b" style="left:1177px;top:103px;" width="28" height="8" viewBox="0 0 28 8" fill="none"><path d="M0.5 6.5 L5.5 1.5 L10.5 6.5 M16.5 1.5 L21.5 6.5 L26.5 1.5" stroke="#58575b" stroke-width="1.2"/></svg><svg class="b" style="left:1264px;top:103px;" width="28" height="8" viewBox="0 0 28 8" fill="none"><path d="M0.5 6.5 L5.5 1.5 L10.5 6.5 M16.5 1.5 L21.5 6.5 L26.5 1.5" stroke="#58575b" stroke-width="1.2"/></svg><svg class="b" style="left:1433px;top:103px;" width="28" height="8" viewBox="0 0 28 8" fill="none"><path d="M0.5 6.5 L5.5 1.5 L10.5 6.5 M16.5 1.5 L21.5 6.5 L26.5 1.5" stroke="#58575b" stroke-width="1.2"/></svg><div class="b" style="left:865.5px;top:122px;width:614.5px;height:21px;background:#2e2b30;"></div><svg class="b" style="left:878px;top:126px;" width="16" height="13" viewBox="0 0 16 13" fill="none"><path d="M0.5 1.6 Q0.5 0.5 1.6 0.5 H5.6 L7.4 2.3 H14.4 Q15.5 2.3 15.5 3.4 V11.4 Q15.5 12.5 14.4 12.5 H1.6 Q0.5 12.5 0.5 11.4Z" fill="#f3b21d"/><path d="M0.5 4.2 H5.8 L7.2 3 H14.4 Q15.5 3 15.5 4.1 V11.4 Q15.5 12.5 14.4 12.5 H1.6 Q0.5 12.5 0.5 11.4Z" fill="#ffd968"/></svg><span class="t" id="t64" style="top:124.5px;font-size:12.5px;line-height:16px;color:#ececec;left:898px;transform-origin:0 50%;transform:scaleX(0.9594);">.dbus-keyrings</span><span class="t" id="t65" style="top:124.5px;font-size:12px;line-height:16px;color:#e2e2e2;left:1177px;transform-origin:0 50%;transform:scaleX(0.9509);">[DIR]</span><div class="b" style="left:1217px;top:125px;width:35px;height:17px;background:#93eec5;background-image:linear-gradient(90deg,rgba(255,255,255,.16),rgba(255,255,255,0) 70%);"></div><span class="t" id="t66" style="top:125.0px;font-size:12px;line-height:16px;color:#101010;right:calc(100% - 1251.5px);transform-origin:100% 50%;transform:scaleX(0.9224);">18&thinsp;д</span><span class="t" id="t67" style="top:124.5px;font-size:12px;line-height:16px;color:#e4e4e4;left:1264px;transform-origin:0 50%;transform:scaleX(0.9448);">2022-02-17</span><span class="t" id="t68" style="top:124.5px;font-size:12px;line-height:16px;color:#e4e4e4;left:1330px;transform-origin:0 50%;transform:scaleX(0.8991);">23:26</span><span class="t" id="t69" style="top:124.5px;font-size:12px;line-height:16px;color:#e4e4e4;right:calc(100% - 1404.5px);transform-origin:100% 50%;letter-spacing:0.6px;transform:scaleX(1.0011);">d----</span><span class="t" id="t70" style="top:124.5px;font-size:12px;line-height:16px;color:#b9b9bb;right:calc(100% - 1464.5px);transform-origin:100% 50%;transform:scaleX(0.8304);">78 B</span><div class="b" style="left:865.5px;top:143px;width:614.5px;height:21px;background:#2b282d;"></div><svg class="b" style="left:878px;top:147px;" width="16" height="13" viewBox="0 0 16 13" fill="none"><path d="M0.5 1.6 Q0.5 0.5 1.6 0.5 H5.6 L7.4 2.3 H14.4 Q15.5 2.3 15.5 3.4 V11.4 Q15.5 12.5 14.4 12.5 H1.6 Q0.5 12.5 0.5 11.4Z" fill="#f3b21d"/><path d="M0.5 4.2 H5.8 L7.2 3 H14.4 Q15.5 3 15.5 4.1 V11.4 Q15.5 12.5 14.4 12.5 H1.6 Q0.5 12.5 0.5 11.4Z" fill="#ffd968"/></svg><span class="t" id="t71" style="top:145.5px;font-size:12.5px;line-height:16px;color:#ececec;left:898px;transform-origin:0 50%;transform:scaleX(0.9299);">.VirtualBox</span><span class="t" id="t72" style="top:145.5px;font-size:12px;line-height:16px;color:#e2e2e2;left:1177px;transform-origin:0 50%;transform:scaleX(0.9509);">[DIR]</span><div class="b" style="left:1217px;top:146px;width:35px;height:17px;background:#93eec5;background-image:linear-gradient(90deg,rgba(255,255,255,.16),rgba(255,255,255,0) 70%);"></div><span class="t" id="t73" style="top:146.0px;font-size:12px;line-height:16px;color:#101010;right:calc(100% - 1251.5px);transform-origin:100% 50%;transform:scaleX(0.9224);">17&thinsp;д</span><span class="t" id="t74" style="top:145.5px;font-size:12px;line-height:16px;color:#e4e4e4;left:1264px;transform-origin:0 50%;transform:scaleX(0.9448);">2022-02-18</span><span class="t" id="t75" style="top:145.5px;font-size:12px;line-height:16px;color:#e4e4e4;left:1330px;transform-origin:0 50%;transform:scaleX(0.8991);">19:34</span><span class="t" id="t76" style="top:145.5px;font-size:12px;line-height:16px;color:#e4e4e4;right:calc(100% - 1404.5px);transform-origin:100% 50%;letter-spacing:0.6px;transform:scaleX(1.0011);">d----</span><span class="t" id="t77" style="top:145.5px;font-size:12px;line-height:16px;color:#b9b9bb;right:calc(100% - 1464.5px);transform-origin:100% 50%;transform:scaleX(0.8709);">273,4 KB</span><div class="b" style="left:865.5px;top:164px;width:614.5px;height:21px;background:#2e2b30;"></div><svg class="b" style="left:877px;top:168px;" width="18" height="13" viewBox="0 0 18 13" fill="none"><path d="M3.6 12 Q0.4 12 0.6 9.2 Q0.8 7 3.2 6.8 Q4.2 3.4 7.4 3.6 Q9 1 12 2.2 Q14.4 3.2 14.6 6 Q17.4 6.4 17.4 9.2 Q17.2 12 14.4 12Z" fill="#1b86e0"/><path d="M3.6 12 Q0.4 12 0.6 9.2 Q0.8 7.2 3.2 6.8 L11 9.4 L14.6 6 Q17.4 6.4 17.4 9.2 Q17.2 12 14.4 12Z" fill="#2fa4f2"/></svg><span class="t" id="t78" style="top:166.5px;font-size:12.5px;line-height:16px;color:#ececec;left:898px;transform-origin:0 50%;transform:scaleX(0.9281);">OneDrive</span><span class="t" id="t79" style="top:166.5px;font-size:12px;line-height:16px;color:#e2e2e2;left:1177px;transform-origin:0 50%;transform:scaleX(0.9509);">[DIR]</span><div class="b" style="left:1217px;top:167px;width:35px;height:17px;background:#98e0f6;background-image:linear-gradient(90deg,rgba(255,255,255,.16),rgba(255,255,255,0) 70%);"></div><span class="t" id="t80" style="top:167.0px;font-size:12px;line-height:16px;color:#101010;right:calc(100% - 1251.5px);transform-origin:100% 50%;transform:scaleX(0.9224);">51&thinsp;д</span><span class="t" id="t81" style="top:166.5px;font-size:12px;line-height:16px;color:#e4e4e4;left:1264px;transform-origin:0 50%;transform:scaleX(0.9448);">2022-01-15</span><span class="t" id="t82" style="top:166.5px;font-size:12px;line-height:16px;color:#e4e4e4;left:1330px;transform-origin:0 50%;transform:scaleX(0.8991);">10:19</span><span class="t" id="t83" style="top:166.5px;font-size:12px;line-height:16px;color:#e4e4e4;right:calc(100% - 1404.5px);transform-origin:100% 50%;letter-spacing:0.6px;transform:scaleX(0.9660);">d-r--</span><span class="t" id="t84" style="top:166.5px;font-size:12px;line-height:16px;color:#b9b9bb;right:calc(100% - 1464.5px);transform-origin:100% 50%;transform:scaleX(0.8604);">0 B</span><div class="b" style="left:865.5px;top:185px;width:614.5px;height:21px;background:#2b282d;"></div><svg class="b" style="left:877px;top:188px;" width="18" height="15" viewBox="0 0 18 15" fill="none"><path d="M0.6 11 Q1 5 7 2 Q13 -0.4 17 2.6 Q14 1.6 11 4 Q4 9 3.4 14 Q0.6 13.4 0.6 11Z" fill="#2a7be0"/><ellipse cx="9.6" cy="8.6" rx="6.8" ry="3.6" transform="rotate(-28 9.6 8.6)" fill="#1f6fe0"/><ellipse cx="10" cy="8.4" rx="4.6" ry="2.3" transform="rotate(-28 10 8.4)" fill="#ffffff"/></svg><span class="t" id="t85" style="top:187.5px;font-size:12.5px;line-height:16px;color:#ececec;left:898px;transform-origin:0 50%;transform:scaleX(0.9121);">YandexDisk</span><span class="t" id="t86" style="top:187.5px;font-size:12px;line-height:16px;color:#e2e2e2;left:1177px;transform-origin:0 50%;transform:scaleX(0.9509);">[DIR]</span><div class="b" style="left:1217px;top:188px;width:35px;height:17px;background:#98ecf0;background-image:linear-gradient(90deg,rgba(255,255,255,.16),rgba(255,255,255,0) 70%);"></div><span class="t" id="t87" style="top:188.0px;font-size:12px;line-height:16px;color:#101010;right:calc(100% - 1251.5px);transform-origin:100% 50%;transform:scaleX(0.9224);">29&thinsp;д</span><span class="t" id="t88" style="top:187.5px;font-size:12px;line-height:16px;color:#e4e4e4;left:1264px;transform-origin:0 50%;transform:scaleX(0.9448);">2022-02-06</span><span class="t" id="t89" style="top:187.5px;font-size:12px;line-height:16px;color:#e4e4e4;left:1330px;transform-origin:0 50%;transform:scaleX(0.8991);">13:23</span><span class="t" id="t90" style="top:187.5px;font-size:12px;line-height:16px;color:#e4e4e4;right:calc(100% - 1404.5px);transform-origin:100% 50%;letter-spacing:0.6px;transform:scaleX(0.9660);">d-r--</span><span class="t" id="t91" style="top:187.5px;font-size:12px;line-height:16px;color:#b9b9bb;right:calc(100% - 1464.5px);transform-origin:100% 50%;transform:scaleX(0.8604);">0 B</span><div class="b" style="left:865.5px;top:206px;width:614.5px;height:21px;background:#2e2b30;"></div><svg class="b" style="left:880px;top:208px;" width="13" height="17" viewBox="0 0 13 17" fill="none"><path d="M0.6 0.6 H8.2 L12.2 4.6 V16.2 H0.6Z" fill="#fafafa"/><path d="M8.2 0.6 V4.6 H12.2Z" fill="#cfcfcf"/></svg><span class="t" id="t92" style="top:208.5px;font-size:12.5px;line-height:16px;color:#c4c4c6;left:898px;transform-origin:0 50%;transform:scaleX(0.9461);">.vivaldi_reporting_data</span><span class="t" id="t93" style="top:208.5px;font-size:12px;line-height:16px;color:#e2e2e2;left:1177px;transform-origin:0 50%;transform:scaleX(0.9339);">vivald...</span><div class="b" style="left:1217px;top:209px;width:35px;height:17px;background:#93eec5;background-image:linear-gradient(90deg,rgba(255,255,255,.16),rgba(255,255,255,0) 70%);"></div><span class="t" id="t94" style="top:209.0px;font-size:12px;line-height:16px;color:#101010;right:calc(100% - 1251.5px);transform-origin:100% 50%;transform:scaleX(0.9224);">19&thinsp;д</span><span class="t" id="t95" style="top:208.5px;font-size:12px;line-height:16px;color:#e4e4e4;left:1264px;transform-origin:0 50%;transform:scaleX(0.9448);">2022-02-16</span><span class="t" id="t96" style="top:208.5px;font-size:12px;line-height:16px;color:#e4e4e4;left:1330px;transform-origin:0 50%;transform:scaleX(0.8991);">13:52</span><span class="t" id="t97" style="top:208.5px;font-size:12px;line-height:16px;color:#e4e4e4;right:calc(100% - 1404.5px);transform-origin:100% 50%;letter-spacing:0.6px;transform:scaleX(0.9505);">-a---</span><span class="t" id="t98" style="top:208.5px;font-size:12px;line-height:16px;color:#b9b9bb;right:calc(100% - 1464.5px);transform-origin:100% 50%;transform:scaleX(0.8610);">527 B</span><span class="t" id="t99" style="top:643.6px;font-size:12px;line-height:16px;color:#f6f6f6;left:1183.6px;transform-origin:0 50%;text-shadow:0 0 0.4px #fff;transform:scaleX(0.9414);">5 элементы</span><span class="t" id="t100" style="top:645.6px;font-size:12px;line-height:16px;color:#c0c0c2;right:calc(100% - 1470.6px);transform-origin:100% 50%;transform:scaleX(0.8674);">527 B</span><span class="t" id="t101" style="top:669.1px;font-size:12px;line-height:16px;color:#ececec;left:1183.6px;transform-origin:0 50%;transform:scaleX(0.9660);">Название</span><span class="t" id="t102" style="top:669.1px;font-size:12px;line-height:16px;color:#ececec;left:1263.2px;transform-origin:0 50%;transform:scaleX(0.9491);">Lenouser</span><span class="t" id="t103" style="top:685.1px;font-size:12px;line-height:16px;color:#ececec;left:1183.6px;transform-origin:0 50%;transform:scaleX(0.9742);">Тип</span><span class="t" id="t104" style="top:685.1px;font-size:12px;line-height:16px;color:#ececec;left:1263.2px;transform-origin:0 50%;transform:scaleX(0.9681);">Папка</span><span class="t" id="t105" style="top:701.1px;font-size:12px;line-height:16px;color:#ececec;left:1183.6px;transform-origin:0 50%;transform:scaleX(0.9595);">Создано</span><span class="t" id="t106" style="top:701.1px;font-size:12px;line-height:16px;color:#ececec;left:1263.2px;transform-origin:0 50%;transform:scaleX(0.9844);">2022-01-13&ensp;20:45</span><span class="t" id="t107" style="top:717.1px;font-size:12px;line-height:16px;color:#ececec;left:1183.6px;transform-origin:0 50%;transform:scaleX(0.9900);">Изменено</span><span class="t" id="t108" style="top:717.1px;font-size:12px;line-height:16px;color:#ececec;left:1263.2px;transform-origin:0 50%;transform:scaleX(0.9844);">2022-03-07&ensp;10:12</span><span class="t" id="t109" style="top:733.1px;font-size:12px;line-height:16px;color:#ececec;left:1183.6px;transform-origin:0 50%;transform:scaleX(0.9939);">Размер</span><span class="t" id="t110" style="top:733.1px;font-size:12px;line-height:16px;color:#ececec;left:1263.2px;transform-origin:0 50%;transform:scaleX(1.0380);">3&thinsp;x&thinsp;54</span><svg class="b" style="left:976px;top:655px;" width="86" height="68" viewBox="0 0 86 68" fill="none"><defs><linearGradient id="fg1" x1="0" y1="0" x2="1" y2="1"><stop offset="0" stop-color="#ffe596"/><stop offset="1" stop-color="#ffc83a"/></linearGradient><linearGradient id="pg1" x1="0" y1="0" x2="1" y2="1"><stop offset="0" stop-color="#a97c08"/><stop offset="1" stop-color="#cf9a0a"/></linearGradient></defs>
<path d="M0.5 4 Q0.5 0.5 4 0.5 H27.5 Q29.6 0.5 31 2 L38 9.6 H0.5Z M0.5 9 H82 Q85.5 9 85.5 12.5 V20 H0.5Z" fill="#f8b61c"/>
<path d="M0.5 15 H29 Q31.6 15 33.4 13.2 L37 9.6 H82 Q85.5 9.6 85.5 13 V63.5 Q85.5 67 82 67 H4 Q0.5 67 0.5 63.5Z" fill="url(#fg1)"/>
<path d="M3 67 H83" stroke="#f0a91a" stroke-width="1.2"/>
<circle cx="42.6" cy="27.6" r="10.4" fill="url(#pg1)"/>
<path d="M24.6 43 Q24.6 40.6 27 40.6 H58.2 Q60.6 40.6 60.6 43 Q60.6 59 42.6 59 Q24.6 59 24.6 43Z" fill="url(#pg1)"/></svg><svg class="b" style="left:1470px;top:666px;" width="10" height="8" viewBox="0 0 10 8" fill="none"><path d="M1.5 6 L5 2.5 L8.5 6" stroke="#5a595d" stroke-width="1.1"/></svg><div class="b" style="left:1473px;top:676px;width:4px;height:42px;background:#56555a;border-radius:2px;"></div><svg class="b" style="left:1470px;top:727px;" width="10" height="8" viewBox="0 0 10 8" fill="none"><path d="M1.5 2 L5 5.5 L8.5 2" stroke="#5a595d" stroke-width="1.1"/></svg><svg class="b" style="left:1352px;top:9px;" width="104" height="13" viewBox="0 0 104 13" fill="none"><path d="M1 6.5 H11 M46.5 1.5 H56 V11 H46.5Z M92.5 1.2 L102.3 11.2 M102.3 1.2 L92.5 11.2" stroke="#8b8b8d" stroke-width="1.1"/></svg><span class="t" id="t111" style="top:729.5px;font-size:6.5px;line-height:8px;color:#b0b0b2;left:1399px;transform-origin:0 50%;transform:scaleX(0.8609);">Уведомления</span><svg class="b" style="left:1442px;top:730px;" width="10" height="7" viewBox="0 0 10 7" fill="none"><path d="M1 5.5 L5 1.5 L9 5.5" stroke="#6a696d" stroke-width="1"/></svg><svg class="b" style="left:1466px;top:726px;" width="13" height="12" viewBox="0 0 13 12" fill="none"><path d="M10.5 1.5v1 M7.5 4.5v1 M10.5 4.5v1 M4.5 7.5v1 M7.5 7.5v1 M10.5 7.5v1 M1.5 10.5v1 M4.5 10.5v1 M7.5 10.5v1 M10.5 10.5v1" stroke="#c8c8ca" stroke-width="1.6"/></svg><div class="b" style="left:0px;top:0px;width:1472px;height:1px;background:#a9a9ab;"></div><div class="b" style="left:0px;top:738px;width:1480px;height:1px;background:#656468;"></div><div class="b" style="left:0px;top:739px;width:1480px;height:1px;background:#828185;"></div><svg class="b" style="left:1470px;top:0px;" width="10" height="10" viewBox="0 0 10 10" fill="none"><path d="M0 0 H10 V10 Q10 0.8 0 0.8Z" fill="#d6d6d8"/></svg></div>
<div class="layer" id="settings"><div class="b" style="left:7px;top:0px;width:616px;height:733.5px;background:#2c282e;border-radius:8px;box-shadow:0 0 8px 3px rgba(0,0,0,.55);border:1.5px solid #1674ba;border-left:1.3px solid #2a6a92;border-top:none;overflow:hidden;"><div class="b" style="left:-2px;top:0px;width:620px;height:32.5px;background:#1674ba;"></div></div><svg class="b" style="left:16px;top:5.6px;" width="17" height="18" viewBox="0 0 17 18" fill="none"><path d="M0.5 4.2 L9 2.2 V16.6 L0.5 15Z" fill="#eafcff"/><path d="M9.8 3.6 H15.6 V15 H9.8" stroke="#eafcff" stroke-width="1.3" fill="#2aa6e6"/><path d="M2.4 8.6 H7.2" stroke="#1a6fb0" stroke-width="1.5"/></svg><span class="t" id="t112" style="top:8.0px;font-size:12.5px;line-height:16px;color:#ffffff;left:37px;transform-origin:0 50%;transform:scaleX(0.9649);">Настройки One Commander</span><svg class="b" style="left:502px;top:9px;" width="104" height="13" viewBox="0 0 104 13" fill="none"><path d="M1 6.5 H11.2 M46.6 1 H56.4 V10.8 H46.6Z M92.4 1 L102.4 11 M102.4 1 L92.4 11" stroke="#ffffff" stroke-width="1.15"/></svg><div class="b" style="left:18px;top:105px;width:125px;height:35px;background:#2e2b30;"></div><div class="b" style="left:18px;top:177px;width:125px;height:35px;background:#2e2b30;"></div><div class="b" style="left:18px;top:249px;width:125px;height:35px;background:#2e2b30;"></div><div class="b" style="left:16px;top:32px;width:132px;height:35px;background:#262329;border:2px solid #1674ba;border-right:none;border-top:none;border-radius:5px 0 0 5px;"></div><div class="b" style="left:128px;top:67px;width:18px;height:665px;background:linear-gradient(90deg,rgba(0,0,0,0),rgba(0,0,0,.16) 45%,rgba(0,0,0,.58));"></div><div class="b" style="left:145.9px;top:65px;width:2.2px;height:668px;background:#1674ba;"></div><svg class="b" style="left:24px;top:41px;" width="16" height="16" viewBox="0 0 16 16" fill="none"><path d="M8.2 1 C4 1 1 4 1 8 C1 12 4.2 15 7.6 15 C9.6 15 9.8 13.4 9.2 12.4 C8.6 11.2 9.4 10 10.8 10 H12.4 C14.2 10 15.2 8.8 15.2 7.2 C15.2 3.6 12 1 8.2 1Z" stroke="#ffffff" stroke-width="1.2"/><circle cx="4.6" cy="7.4" r="1" fill="#ffffff"/><circle cx="6.6" cy="4.4" r="1" fill="#ffffff"/><circle cx="10" cy="4.2" r="1" fill="#ffffff"/><circle cx="12.4" cy="6.6" r="1" fill="#ffffff"/></svg><span class="t" id="t113" style="top:41.0px;font-size:13px;line-height:17px;color:#ffffff;left:48px;transform-origin:0 50%;transform:scaleX(0.9148);">Тема</span><svg class="b" style="left:24px;top:77px;" width="16" height="16" viewBox="0 0 16 16" fill="none"><path d="M0.5 3 H5 M8.4 3 H15.5 M0.5 8 H1.6 M5 8 H15.5 M0.5 13 H10.6 M14 13 H15.5" stroke="#ffffff" stroke-width="1.2"/><circle cx="6.7" cy="3" r="1.7" stroke="#ffffff" stroke-width="1.1"/><circle cx="3.3" cy="8" r="1.7" stroke="#ffffff" stroke-width="1.1"/><circle cx="12.3" cy="13" r="1.7" stroke="#ffffff" stroke-width="1.1"/></svg><span class="t" id="t114" style="top:77.0px;font-size:13px;line-height:17px;color:#ffffff;left:48px;transform-origin:0 50%;transform:scaleX(0.9042);">Общее</span><svg class="b" style="left:24px;top:113px;" width="16" height="16" viewBox="0 0 16 16" fill="none"><path d="M0.5 0.7h2.6v2.6h-2.6z M0.5 4.8h2.6v2.6h-2.6z M0.5 8.9h2.6v2.6h-2.6z M0.5 13h2.6v2.6h-2.6z" stroke="#ffffff" stroke-width="1"/><path d="M5.4 2.1 H15.5 M5.4 6.1 H13 M5.4 10.1 H15 M5.4 14.1 H12" stroke="#ffffff" stroke-width="1.2"/></svg><span class="t" id="t115" style="top:113.0px;font-size:13px;line-height:17px;color:#ffffff;left:48px;transform-origin:0 50%;transform:scaleX(0.9347);">Просмотр</span><svg class="b" style="left:24px;top:149px;" width="16" height="16" viewBox="0 0 16 16" fill="none"><path d="M0.6 3.6 H15.4 V13 H0.6Z M8 3.6 V13" stroke="#ffffff" stroke-width="1.2"/></svg><span class="t" id="t116" style="top:149.0px;font-size:13px;line-height:17px;color:#ffffff;left:48px;transform-origin:0 50%;transform:scaleX(0.8987);">Столбцы</span><svg class="b" style="left:24px;top:185px;" width="16" height="16" viewBox="0 0 16 16" fill="none"><path d="M0.6 2 H15.4 V14 H0.6Z M0.6 4.6 H15.4" stroke="#ffffff" stroke-width="1.2"/></svg><span class="t" id="t117" style="top:185.0px;font-size:13px;line-height:17px;color:#ffffff;left:48px;transform-origin:0 50%;transform:scaleX(0.9512);">Оконный</span><svg class="b" style="left:24px;top:221px;" width="16" height="16" viewBox="0 0 16 16" fill="none"><path d="M0.7 8.2 C2.8 5 5.2 4 8 4 C10.8 4 13.2 5 15.3 8.2 C13.2 11.4 10.8 12.4 8 12.4 C5.2 12.4 2.8 11.4 0.7 8.2Z" stroke="#ffffff" stroke-width="1.3"/><circle cx="8" cy="8.2" r="2.3" stroke="#ffffff" stroke-width="1.5"/></svg><span class="t" id="t118" style="top:221.0px;font-size:13px;line-height:17px;color:#ffffff;left:48px;transform-origin:0 50%;transform:scaleX(0.8984);">Предваритель...</span><svg class="b" style="left:24px;top:257px;" width="16" height="16" viewBox="0 0 16 16" fill="none"><path d="M1 4.6 H7.4 V15 H1Z M1 9.8 H12.6 M7.4 9.8 V15 H12.6 V9.8" stroke="#ffffff" stroke-width="1.2"/><path d="M11.2 0.8 L15 4.6 L11.2 8.4 L7.4 4.6Z" stroke="#ffffff" stroke-width="1.2"/></svg><span class="t" id="t119" style="top:257.0px;font-size:13px;line-height:17px;color:#ffffff;left:48px;transform-origin:0 50%;transform:scaleX(0.9561);">Другое</span><svg class="b" style="left:24px;top:293px;" width="16" height="16" viewBox="0 0 16 16" fill="none"><path d="M1 8 H14.6 M9 2.2 L14.8 8 L9 13.8" stroke="#ffffff" stroke-width="1.25"/></svg><span class="t" id="t120" style="top:293.0px;font-size:13px;line-height:17px;color:#ffffff;left:48px;transform-origin:0 50%;transform:scaleX(0.9350);">Дополнительно</span><div class="b" style="left:12px;top:679px;width:130.5px;height:49.5px;background:#5a5a5c;border:1.5px solid #2d7d33;"></div><span class="t" id="t121" style="top:685.5px;font-size:13px;line-height:17px;color:#ffffff;left:21px;transform-origin:0 50%;transform:scaleX(0.9228);">Получить лицензию</span><span class="t" id="t122" style="top:701.0px;font-size:13px;line-height:17px;color:#ffffff;left:21px;transform-origin:0 50%;transform:scaleX(0.8164);">PRO</span><span class="t" id="t123" style="top:40.5px;font-size:18px;line-height:23px;color:#ffffff;left:163px;transform-origin:0 50%;transform:scaleX(0.9672);">Тема</span><div class="b" style="left:163px;top:71px;width:436px;height:128.5px;background:#111113;border:1px solid #d9d9db;border-radius:3px;"></div><span class="t" id="t124" style="top:83.0px;font-size:14px;line-height:18px;color:#ffffff;left:180px;transform-origin:0 50%;transform:scaleX(0.9810);">Dark</span><div class="th" style="left:300px;top:82.5px;height:106px;"><div class="b" style="left:0px;top:0px;width:111px;height:107px;background:linear-gradient(120deg,#0b2f50 0%,#10293f 70%,#14263a 100%);"></div><div class="b" style="left:110px;top:0px;width:140px;height:107px;background:#2a282c;"></div><span class="t" id="t125" style="top:5.5px;font-size:5.6px;line-height:7px;color:#c9d6e2;opacity:0.85;left:8px;transform-origin:0 50%;transform:scaleX(0.9692);">One Commander v3 β.555</span><div class="b" style="left:7px;top:18px;width:93px;height:56px;background:#2b292d;border-radius:2.5px;"></div><span class="t" id="t126" style="top:22.5px;font-size:7.2px;line-height:9px;color:#e8e8e8;left:12px;transform-origin:0 50%;transform:scaleX(1.0307);">Drives</span><span class="t" id="t127" style="top:20.5px;font-size:7px;line-height:9px;color:#e8e8e8;opacity:0.8;left:85px;transform-origin:0 50%;transform:scaleX(1.0000);">···</span><div class="b" style="left:14px;top:38px;width:6px;height:3px;background:#58b7ea;border-radius:1px;"></div><div class="b" style="left:15px;top:57px;width:5.5px;height:3px;background:#c9ccd2;border-radius:1px;"></div><span class="t" id="t128" style="top:35.5px;font-size:5.4px;line-height:7px;color:#e8e8e8;font-weight:700;left:22px;transform-origin:0 50%;transform:scaleX(0.9644);">C:</span><span class="t" id="t129" style="top:43.5px;font-size:5px;line-height:6px;color:#c8c8c8;opacity:0.85;left:22px;transform-origin:0 50%;transform:scaleX(0.7988);">19%</span><span class="t" id="t130" style="top:43.5px;font-size:5px;line-height:6px;color:#c8c8c8;opacity:0.85;right:calc(100% - 92px);transform-origin:100% 50%;">175 / 969 GB</span><span class="t" id="t131" style="top:54.5px;font-size:5.4px;line-height:7px;color:#e8e8e8;font-weight:700;left:22px;transform-origin:0 50%;transform:scaleX(0.9644);">D:</span><span class="t" id="t132" style="top:55.0px;font-size:5px;line-height:6px;color:#c8c8c8;opacity:0.8;left:34px;transform-origin:0 50%;transform:scaleX(0.9529);">DATA</span><span class="t" id="t133" style="top:62.5px;font-size:5px;line-height:6px;color:#c8c8c8;opacity:0.85;left:22px;transform-origin:0 50%;transform:scaleX(0.7988);">15%</span><span class="t" id="t134" style="top:62.5px;font-size:5px;line-height:6px;color:#c8c8c8;opacity:0.85;right:calc(100% - 92px);transform-origin:100% 50%;">161 / 1074 GB</span><div class="b" style="left:7px;top:80px;width:93px;height:40px;background:#2b292d;border-radius:2.5px;"></div><span class="t" id="t135" style="top:84.5px;font-size:7.2px;line-height:9px;color:#e8e8e8;left:12px;transform-origin:0 50%;transform:scaleX(1.0726);">milos</span><span class="t" id="t136" style="top:82.5px;font-size:7px;line-height:9px;color:#e8e8e8;opacity:0.6;left:71px;transform-origin:0 50%;transform:scaleX(1.0000);">···</span><span class="t" id="t137" style="top:83.0px;font-size:9px;line-height:12px;color:#e8e8e8;opacity:0.9;left:87px;transform-origin:0 50%;transform:scaleX(1.1395);">+</span><div class="b" style="left:14px;top:98.5px;width:4.6px;height:4px;border:0.7px solid #e8e8e8;opacity:.8;"></div><span class="t" id="t138" style="top:97.5px;font-size:5.4px;line-height:7px;color:#e8e8e8;opacity:0.85;left:22px;transform-origin:0 50%;transform:scaleX(0.8346);">This PC</span><div class="b" style="left:204px;top:0px;width:46px;height:17px;background:#1d1c1f;"></div><div class="b" style="left:110px;top:0px;width:94px;height:17px;background:#2a282c;"></div><div class="b" style="left:115px;top:7.3px;width:4.6px;height:6.2px;background:#f5c542;border-radius:0.6px;box-shadow:inset -1px 0 0 rgba(255,255,255,.35);"></div><span class="t" id="t139" style="top:7.0px;font-size:5.6px;line-height:7px;color:#e2e2e2;opacity:0.9;left:122px;transform-origin:0 50%;transform:scaleX(0.9762);">Program Files</span><div class="b" style="left:209px;top:7.3px;width:4.6px;height:6.2px;background:#f5c542;border-radius:0.6px;box-shadow:inset -1px 0 0 rgba(255,255,255,.35);"></div><span class="t" id="t140" style="top:7.0px;font-size:5.6px;line-height:7px;color:#e2e2e2;opacity:0.9;left:216px;transform-origin:0 50%;transform:scaleX(1.0131);">Windows</span><svg class="b" style="left:112.5px;top:21.5px;" width="7" height="6" viewBox="0 0 7 6" fill="none"><path d="M0 0.5 H1.6 M2.4 0.7 H6.6 M1.8 2.9 H6.6 M1.8 5.1 H6.6" stroke="#f0f0f0" stroke-width="0.7"/></svg><span class="t" id="t141" style="top:19.5px;font-size:8.6px;line-height:11px;color:#f0f0f0;left:126px;transform-origin:0 50%;transform:scaleX(0.9483);">MILOSG&thinsp;\&thinsp;C:\&thinsp;Program Files</span><span class="t" id="t142" style="top:35.5px;font-size:8.2px;line-height:11px;color:#f0f0f0;left:114px;transform-origin:0 50%;transform:scaleX(1.0006);">Program Files</span><svg class="b" style="left:115px;top:49.5px;" width="50" height="7" viewBox="0 0 50 7" fill="none"><path d="M3 6.6 V0.8 M0.8 3 L3 0.8 L5.2 3 M14.5 3.5 H8.4 M10.8 1.1 L8.4 3.5 L10.8 5.9 M18 3.5 H24.2 M21.8 1.1 L24.2 3.5 L21.8 5.9 M27.4 0.8 H29.6 L30.4 1.8 H34 V6.2 H27.4Z" stroke="#e0e0e0" stroke-width="0.7" opacity="0.9"/><path d="M37.4 4.6 L39.4 2.6 L41.4 4.6" stroke="#e0e0e0" stroke-width="0.9"/><path d="M44.4 2.6 L46.4 4.6 L48.4 2.6" stroke="#55545a" stroke-width="0.7"/></svg><svg class="b" style="left:230px;top:50.5px;" width="14" height="5" viewBox="0 0 14 5" fill="none"><path d="M0.6 3.6 L2.8 1.4 L5 3.6 M8.4 1.4 L10.6 3.6 L12.8 1.4" stroke="#55545a" stroke-width="0.7"/></svg><div class="b" style="left:113px;top:72.4px;width:137px;height:9.8px;background:#1b5fa2;border-radius:1px 0 0 1px;"></div><div class="b" style="left:113px;top:82.2px;width:137px;height:9.8px;background:#39373c;border-radius:1px 0 0 1px;"></div><div class="b" style="left:117px;top:64.3px;width:4.6px;height:6.2px;background:#f5c542;border-radius:0.6px;box-shadow:inset -1px 0 0 rgba(255,255,255,.35);"></div><span class="t" id="t143" style="top:64.0px;font-size:5.6px;line-height:7px;color:#e6e6e6;opacity:0.9;left:126px;transform-origin:0 50%;">3DF Zephyr Free</span><span class="t" id="t144" style="top:64.0px;font-size:5.4px;line-height:7px;color:#d8d8d8;opacity:0.9;right:calc(100% - 243px);transform-origin:100% 50%;transform:scaleX(1.0178);">[DIR]</span><div class="b" style="left:117px;top:74.1px;width:4.6px;height:6.2px;background:#f5c542;border-radius:0.6px;box-shadow:inset -1px 0 0 rgba(255,255,255,.35);"></div><span class="t" id="t145" style="top:73.8px;font-size:5.6px;line-height:7px;color:#e6e6e6;opacity:0.9;left:126px;transform-origin:0 50%;">7-Zip</span><span class="t" id="t146" style="top:73.8px;font-size:5.4px;line-height:7px;color:#d8d8d8;opacity:0.9;right:calc(100% - 243px);transform-origin:100% 50%;transform:scaleX(1.0178);">[DIR]</span><div class="b" style="left:117px;top:83.89999999999999px;width:4.6px;height:6.2px;background:#f5c542;border-radius:0.6px;box-shadow:inset -1px 0 0 rgba(255,255,255,.35);"></div><span class="t" id="t147" style="top:83.6px;font-size:5.6px;line-height:7px;color:#e6e6e6;opacity:0.9;left:126px;transform-origin:0 50%;">Adobe</span><span class="t" id="t148" style="top:83.6px;font-size:5.4px;line-height:7px;color:#d8d8d8;opacity:0.9;right:calc(100% - 243px);transform-origin:100% 50%;transform:scaleX(1.0178);">[DIR]</span><div class="b" style="left:117px;top:93.7px;width:4.6px;height:6.2px;background:#f5c542;border-radius:0.6px;box-shadow:inset -1px 0 0 rgba(255,255,255,.35);"></div><span class="t" id="t149" style="top:93.4px;font-size:5.6px;line-height:7px;color:#e6e6e6;opacity:0.9;left:126px;transform-origin:0 50%;">Android</span><span class="t" id="t150" style="top:93.4px;font-size:5.4px;line-height:7px;color:#d8d8d8;opacity:0.9;right:calc(100% - 243px);transform-origin:100% 50%;transform:scaleX(1.0178);">[DIR]</span><div class="b" style="left:117px;top:103.5px;width:4.6px;height:6.2px;background:#f5c542;border-radius:0.6px;box-shadow:inset -1px 0 0 rgba(255,255,255,.35);"></div><span class="t" id="t151" style="top:103.2px;font-size:5.6px;line-height:7px;color:#e6e6e6;opacity:0.9;left:126px;transform-origin:0 50%;">Application Verifier</span><span class="t" id="t152" style="top:103.2px;font-size:5.4px;line-height:7px;color:#d8d8d8;opacity:0.9;right:calc(100% - 243px);transform-origin:100% 50%;transform:scaleX(1.0178);">[DIR]</span><div class="b" style="left:0;top:0;width:250px;height:106px;border:1px solid rgba(110,140,170,.75);"></div></div><svg class="b" style="left:576px;top:132px;" width="14" height="8" viewBox="0 0 14 8" fill="none"><path d="M1 1.2 L6.6 6.8 L12.2 1.2" stroke="#e4e4e4" stroke-width="1.2"/></svg><div class="b" style="left:163px;top:220.5px;width:436px;height:61px;background:#1e1c20;border:1px solid #a9a9ab;border-radius:3px;"></div><span class="t" id="t153" style="top:231.5px;font-size:14px;line-height:18px;color:#ffffff;left:180px;transform-origin:0 50%;">Dark</span><svg class="b" style="left:576.5px;top:247.5px;" width="14" height="8" viewBox="0 0 14 8" fill="none"><path d="M1 1.2 L6.6 6.8 L12.2 1.2" stroke="#e4e4e4" stroke-width="1.2"/></svg><div class="b" style="left:163px;top:318.5px;width:436px;height:45px;background:#1e1c20;border:1px solid #a9a9ab;border-radius:3px;"></div><span class="t" id="t154" style="top:329.5px;font-size:14px;line-height:18px;color:#ffffff;left:180px;transform-origin:0 50%;">Segoe UI</span><svg class="b" style="left:576.5px;top:337.5px;" width="14" height="8" viewBox="0 0 14 8" fill="none"><path d="M1 1.2 L6.6 6.8 L12.2 1.2" stroke="#e4e4e4" stroke-width="1.2"/></svg><div class="b" style="left:163px;top:432px;width:436px;height:60px;background:#1e1c20;border:1px solid #a9a9ab;border-radius:3px;"></div><span class="t" id="t155" style="top:443.0px;font-size:14px;line-height:18px;color:#ffffff;left:180px;transform-origin:0 50%;">Default</span><svg class="b" style="left:576.5px;top:458.5px;" width="14" height="8" viewBox="0 0 14 8" fill="none"><path d="M1 1.2 L6.6 6.8 L12.2 1.2" stroke="#e4e4e4" stroke-width="1.2"/></svg><span class="t" id="t156" style="top:491.1px;font-size:13px;line-height:17px;color:#8a898c;right:calc(100% - 585px);transform-origin:100% 50%;">Использовать акцентный цвет, заданный системой</span><span class="t" id="t157" style="top:551.1px;font-size:13px;line-height:17px;color:#8a898c;right:calc(100% - 573.5px);transform-origin:100% 50%;">Настроить кнопки мыши и применить</span><svg class="b" style="left:580px;top:538px;" width="16" height="11" viewBox="0 0 16 11" fill="none"><path d="M4.4 1 H11.6 Q14.4 1 15.2 5 L15.6 8.4 Q15.4 10.2 13.8 10 Q12.6 9.8 11.6 7.6 H4.4 Q3.4 9.8 2.2 10 Q0.6 10.2 0.4 8.4 L0.8 5 Q1.6 1 4.4 1Z" fill="#8f8e92"/><path d="M4 4.4 H6.4 M5.2 3.2 V5.6 M9.6 4.4 H12" stroke="#2a272c" stroke-width="0.9"/></svg><svg class="b" style="left:613px;top:35px;" width="9" height="7" viewBox="0 0 9 7" fill="none"><path d="M1.2 5.4 L4.5 2.1 L7.8 5.4" stroke="#5f5d62" stroke-width="1"/></svg><div class="b" style="left:614.6px;top:46px;width:4.2px;height:367px;background:#7c7b7e;border-radius:2px;"></div><div class="b" style="left:620.4px;top:8px;width:2.2px;height:718px;background:#1674ba;"></div><svg class="b" style="left:613px;top:683px;" width="9" height="48" viewBox="0 0 9 48" fill="none"><path d="M1.2 2 L4.5 5.3 L7.8 2 M1.2 7.6 H7.8 M1.2 21 L4.5 24.3 L7.8 21 M1.2 24.6 L4.5 27.9 L7.8 24.6 M1.2 40.4 L4.5 43.7 L7.8 40.4" stroke="#66646a" stroke-width="1"/></svg></div>
<div class="layer" id="popup"><div class="b" style="left:160px;top:194px;width:402px;height:7px;background:linear-gradient(#131214,#1f1e20);"></div><div class="b" style="left:160px;top:200px;width:402px;height:545px;background:#2d2d2d;box-shadow:0 0 7px 1px rgba(0,0,0,.75);"></div><div class="b" style="left:160px;top:200px;width:402px;height:129px;background:#185d9a;"></div><span class="t" id="t158" style="top:211.4px;font-size:14px;line-height:18px;color:#ffffff;left:176.5px;transform-origin:0 50%;transform:scaleX(0.9810);">Dark</span><div class="th" style="left:296px;top:210.3px;height:106px;"><div class="b" style="left:0px;top:0px;width:111px;height:107px;background:linear-gradient(120deg,#0b2f50 0%,#10293f 70%,#14263a 100%);"></div><div class="b" style="left:110px;top:0px;width:140px;height:107px;background:#2a282c;"></div><span class="t" id="t159" style="top:5.5px;font-size:5.6px;line-height:7px;color:#c9d6e2;opacity:0.85;left:8px;transform-origin:0 50%;transform:scaleX(0.9692);">One Commander v3 β.555</span><div class="b" style="left:7px;top:18px;width:93px;height:56px;background:#2b292d;border-radius:2.5px;"></div><span class="t" id="t160" style="top:22.5px;font-size:7.2px;line-height:9px;color:#e8e8e8;left:12px;transform-origin:0 50%;transform:scaleX(1.0307);">Drives</span><span class="t" id="t161" style="top:20.5px;font-size:7px;line-height:9px;color:#e8e8e8;opacity:0.8;left:85px;transform-origin:0 50%;transform:scaleX(1.0000);">···</span><div class="b" style="left:14px;top:38px;width:6px;height:3px;background:#58b7ea;border-radius:1px;"></div><div class="b" style="left:15px;top:57px;width:5.5px;height:3px;background:#c9ccd2;border-radius:1px;"></div><span class="t" id="t162" style="top:35.5px;font-size:5.4px;line-height:7px;color:#e8e8e8;font-weight:700;left:22px;transform-origin:0 50%;transform:scaleX(0.9644);">C:</span><span class="t" id="t163" style="top:43.5px;font-size:5px;line-height:6px;color:#c8c8c8;opacity:0.85;left:22px;transform-origin:0 50%;transform:scaleX(0.7988);">19%</span><span class="t" id="t164" style="top:43.5px;font-size:5px;line-height:6px;color:#c8c8c8;opacity:0.85;right:calc(100% - 92px);transform-origin:100% 50%;">175 / 969 GB</span><span class="t" id="t165" style="top:54.5px;font-size:5.4px;line-height:7px;color:#e8e8e8;font-weight:700;left:22px;transform-origin:0 50%;transform:scaleX(0.9644);">D:</span><span class="t" id="t166" style="top:55.0px;font-size:5px;line-height:6px;color:#c8c8c8;opacity:0.8;left:34px;transform-origin:0 50%;transform:scaleX(0.9529);">DATA</span><span class="t" id="t167" style="top:62.5px;font-size:5px;line-height:6px;color:#c8c8c8;opacity:0.85;left:22px;transform-origin:0 50%;transform:scaleX(0.7988);">15%</span><span class="t" id="t168" style="top:62.5px;font-size:5px;line-height:6px;color:#c8c8c8;opacity:0.85;right:calc(100% - 92px);transform-origin:100% 50%;">161 / 1074 GB</span><div class="b" style="left:7px;top:80px;width:93px;height:40px;background:#2b292d;border-radius:2.5px;"></div><span class="t" id="t169" style="top:84.5px;font-size:7.2px;line-height:9px;color:#e8e8e8;left:12px;transform-origin:0 50%;transform:scaleX(1.0726);">milos</span><span class="t" id="t170" style="top:82.5px;font-size:7px;line-height:9px;color:#e8e8e8;opacity:0.6;left:71px;transform-origin:0 50%;transform:scaleX(1.0000);">···</span><span class="t" id="t171" style="top:83.0px;font-size:9px;line-height:12px;color:#e8e8e8;opacity:0.9;left:87px;transform-origin:0 50%;transform:scaleX(1.1395);">+</span><div class="b" style="left:14px;top:98.5px;width:4.6px;height:4px;border:0.7px solid #e8e8e8;opacity:.8;"></div><span class="t" id="t172" style="top:97.5px;font-size:5.4px;line-height:7px;color:#e8e8e8;opacity:0.85;left:22px;transform-origin:0 50%;transform:scaleX(0.8346);">This PC</span><div class="b" style="left:204px;top:0px;width:46px;height:17px;background:#1d1c1f;"></div><div class="b" style="left:110px;top:0px;width:94px;height:17px;background:#2a282c;"></div><div class="b" style="left:115px;top:7.3px;width:4.6px;height:6.2px;background:#f5c542;border-radius:0.6px;box-shadow:inset -1px 0 0 rgba(255,255,255,.35);"></div><span class="t" id="t173" style="top:7.0px;font-size:5.6px;line-height:7px;color:#e2e2e2;opacity:0.9;left:122px;transform-origin:0 50%;transform:scaleX(0.9762);">Program Files</span><div class="b" style="left:209px;top:7.3px;width:4.6px;height:6.2px;background:#f5c542;border-radius:0.6px;box-shadow:inset -1px 0 0 rgba(255,255,255,.35);"></div><span class="t" id="t174" style="top:7.0px;font-size:5.6px;line-height:7px;color:#e2e2e2;opacity:0.9;left:216px;transform-origin:0 50%;transform:scaleX(1.0131);">Windows</span><svg class="b" style="left:112.5px;top:21.5px;" width="7" height="6" viewBox="0 0 7 6" fill="none"><path d="M0 0.5 H1.6 M2.4 0.7 H6.6 M1.8 2.9 H6.6 M1.8 5.1 H6.6" stroke="#f0f0f0" stroke-width="0.7"/></svg><span class="t" id="t175" style="top:19.5px;font-size:8.6px;line-height:11px;color:#f0f0f0;left:126px;transform-origin:0 50%;transform:scaleX(0.9483);">MILOSG&thinsp;\&thinsp;C:\&thinsp;Program Files</span><span class="t" id="t176" style="top:35.5px;font-size:8.2px;line-height:11px;color:#f0f0f0;left:114px;transform-origin:0 50%;transform:scaleX(1.0006);">Program Files</span><svg class="b" style="left:115px;top:49.5px;" width="50" height="7" viewBox="0 0 50 7" fill="none"><path d="M3 6.6 V0.8 M0.8 3 L3 0.8 L5.2 3 M14.5 3.5 H8.4 M10.8 1.1 L8.4 3.5 L10.8 5.9 M18 3.5 H24.2 M21.8 1.1 L24.2 3.5 L21.8 5.9 M27.4 0.8 H29.6 L30.4 1.8 H34 V6.2 H27.4Z" stroke="#e0e0e0" stroke-width="0.7" opacity="0.9"/><path d="M37.4 4.6 L39.4 2.6 L41.4 4.6" stroke="#e0e0e0" stroke-width="0.9"/><path d="M44.4 2.6 L46.4 4.6 L48.4 2.6" stroke="#55545a" stroke-width="0.7"/></svg><svg class="b" style="left:230px;top:50.5px;" width="14" height="5" viewBox="0 0 14 5" fill="none"><path d="M0.6 3.6 L2.8 1.4 L5 3.6 M8.4 1.4 L10.6 3.6 L12.8 1.4" stroke="#55545a" stroke-width="0.7"/></svg><div class="b" style="left:113px;top:72.4px;width:137px;height:9.8px;background:#1b5fa2;border-radius:1px 0 0 1px;"></div><div class="b" style="left:113px;top:82.2px;width:137px;height:9.8px;background:#39373c;border-radius:1px 0 0 1px;"></div><div class="b" style="left:117px;top:64.3px;width:4.6px;height:6.2px;background:#f5c542;border-radius:0.6px;box-shadow:inset -1px 0 0 rgba(255,255,255,.35);"></div><span class="t" id="t177" style="top:64.0px;font-size:5.6px;line-height:7px;color:#e6e6e6;opacity:0.9;left:126px;transform-origin:0 50%;">3DF Zephyr Free</span><span class="t" id="t178" style="top:64.0px;font-size:5.4px;line-height:7px;color:#d8d8d8;opacity:0.9;right:calc(100% - 243px);transform-origin:100% 50%;transform:scaleX(1.0178);">[DIR]</span><div class="b" style="left:117px;top:74.1px;width:4.6px;height:6.2px;background:#f5c542;border-radius:0.6px;box-shadow:inset -1px 0 0 rgba(255,255,255,.35);"></div><span class="t" id="t179" style="top:73.8px;font-size:5.6px;line-height:7px;color:#e6e6e6;opacity:0.9;left:126px;transform-origin:0 50%;">7-Zip</span><span class="t" id="t180" style="top:73.8px;font-size:5.4px;line-height:7px;color:#d8d8d8;opacity:0.9;right:calc(100% - 243px);transform-origin:100% 50%;transform:scaleX(1.0178);">[DIR]</span><div class="b" style="left:117px;top:83.89999999999999px;width:4.6px;height:6.2px;background:#f5c542;border-radius:0.6px;box-shadow:inset -1px 0 0 rgba(255,255,255,.35);"></div><span class="t" id="t181" style="top:83.6px;font-size:5.6px;line-height:7px;color:#e6e6e6;opacity:0.9;left:126px;transform-origin:0 50%;">Adobe</span><span class="t" id="t182" style="top:83.6px;font-size:5.4px;line-height:7px;color:#d8d8d8;opacity:0.9;right:calc(100% - 243px);transform-origin:100% 50%;transform:scaleX(1.0178);">[DIR]</span><div class="b" style="left:117px;top:93.7px;width:4.6px;height:6.2px;background:#f5c542;border-radius:0.6px;box-shadow:inset -1px 0 0 rgba(255,255,255,.35);"></div><span class="t" id="t183" style="top:93.4px;font-size:5.6px;line-height:7px;color:#e6e6e6;opacity:0.9;left:126px;transform-origin:0 50%;">Android</span><span class="t" id="t184" style="top:93.4px;font-size:5.4px;line-height:7px;color:#d8d8d8;opacity:0.9;right:calc(100% - 243px);transform-origin:100% 50%;transform:scaleX(1.0178);">[DIR]</span><div class="b" style="left:117px;top:103.5px;width:4.6px;height:6.2px;background:#f5c542;border-radius:0.6px;box-shadow:inset -1px 0 0 rgba(255,255,255,.35);"></div><span class="t" id="t185" style="top:103.2px;font-size:5.6px;line-height:7px;color:#e6e6e6;opacity:0.9;left:126px;transform-origin:0 50%;">Application Verifier</span><span class="t" id="t186" style="top:103.2px;font-size:5.4px;line-height:7px;color:#d8d8d8;opacity:0.9;right:calc(100% - 243px);transform-origin:100% 50%;transform:scaleX(1.0178);">[DIR]</span><div class="b" style="left:0;top:0;width:250px;height:106px;border:1px solid rgba(110,140,170,.75);"></div></div><span class="t" id="t187" style="top:340.7px;font-size:14px;line-height:18px;color:#ffffff;left:176.5px;transform-origin:0 50%;transform:scaleX(1.0211);">Light</span><div class="th" style="left:296px;top:339.6px;height:106px;"><div class="b" style="left:0px;top:0px;width:111px;height:107px;background:#ffffff;"></div><div class="b" style="left:110px;top:0px;width:140px;height:107px;background:#f3f3f3;"></div><span class="t" id="t188" style="top:7.0px;font-size:5.6px;line-height:7px;color:#333;opacity:0.85;left:8px;transform-origin:0 50%;transform:scaleX(0.9894);">One Commander 3.4.18.0</span><div class="b" style="left:7px;top:20px;width:93px;height:56px;background:#f1f1f1;border-radius:2.5px;"></div><span class="t" id="t189" style="top:24.5px;font-size:7.2px;line-height:9px;color:#222;left:12px;transform-origin:0 50%;transform:scaleX(1.0307);">Drives</span><span class="t" id="t190" style="top:22.5px;font-size:7px;line-height:9px;color:#222;opacity:0.8;left:85px;transform-origin:0 50%;transform:scaleX(1.0000);">···</span><div class="b" style="left:14px;top:41px;width:6px;height:3px;background:#58b7ea;border-radius:1px;"></div><div class="b" style="left:15px;top:60px;width:5.5px;height:3px;background:#c9ccd2;border-radius:1px;"></div><span class="t" id="t191" style="top:38.5px;font-size:5.4px;line-height:7px;color:#222;font-weight:700;left:22px;transform-origin:0 50%;transform:scaleX(0.9644);">C:</span><span class="t" id="t192" style="top:46.5px;font-size:5px;line-height:6px;color:#444;opacity:0.85;left:22px;transform-origin:0 50%;transform:scaleX(0.7988);">96%</span><span class="t" id="t193" style="top:46.5px;font-size:5px;line-height:6px;color:#444;opacity:0.85;right:calc(100% - 92px);transform-origin:100% 50%;">35 GB</span><span class="t" id="t194" style="top:57.5px;font-size:5.4px;line-height:7px;color:#222;font-weight:700;left:22px;transform-origin:0 50%;transform:scaleX(0.9644);">D:</span><span class="t" id="t195" style="top:58.0px;font-size:5px;line-height:6px;color:#444;opacity:0.8;left:34px;transform-origin:0 50%;transform:scaleX(0.9529);">DATA</span><span class="t" id="t196" style="top:65.5px;font-size:5px;line-height:6px;color:#444;opacity:0.85;left:22px;transform-origin:0 50%;transform:scaleX(0.7988);">90%</span><span class="t" id="t197" style="top:65.5px;font-size:5px;line-height:6px;color:#444;opacity:0.85;right:calc(100% - 92px);transform-origin:100% 50%;">15 GB</span><div class="b" style="left:7px;top:82px;width:93px;height:40px;background:#f1f1f1;border-radius:2.5px;"></div><span class="t" id="t198" style="top:86.5px;font-size:7.2px;line-height:9px;color:#222;left:12px;transform-origin:0 50%;transform:scaleX(1.0726);">milos</span><span class="t" id="t199" style="top:84.5px;font-size:7px;line-height:9px;color:#222;opacity:0.6;left:71px;transform-origin:0 50%;transform:scaleX(1.0000);">···</span><span class="t" id="t200" style="top:85.0px;font-size:9px;line-height:12px;color:#222;opacity:0.9;left:87px;transform-origin:0 50%;transform:scaleX(1.1395);">+</span><div class="b" style="left:14px;top:101.1px;width:4.6px;height:4px;border:0.7px solid #222;opacity:.8;"></div><span class="t" id="t201" style="top:100.1px;font-size:5.4px;line-height:7px;color:#222;opacity:0.85;left:22px;transform-origin:0 50%;transform:scaleX(0.8346);">This PC</span><div class="b" style="left:110px;top:0px;width:140px;height:20px;background:#ffffff;"></div><div class="b" style="left:205px;top:5px;width:45px;height:15px;background:#dcdcdc;border-radius:2px 0 0 0;"></div><div class="b" style="left:111px;top:4.5px;width:93px;height:16px;background:#fbfbfb;border:0.8px solid #3b9be8;border-bottom:none;border-radius:3px 3px 0 0;"></div><div class="b" style="left:115px;top:9.3px;width:4.6px;height:6.2px;background:#f5c542;border-radius:0.6px;box-shadow:inset -1px 0 0 rgba(255,255,255,.35);"></div><span class="t" id="t202" style="top:9.0px;font-size:5.6px;line-height:7px;color:#333;opacity:0.9;left:122px;transform-origin:0 50%;transform:scaleX(0.9762);">Program Files</span><div class="b" style="left:209px;top:9.3px;width:4.6px;height:6.2px;background:#f5c542;border-radius:0.6px;box-shadow:inset -1px 0 0 rgba(255,255,255,.35);"></div><span class="t" id="t203" style="top:9.0px;font-size:5.6px;line-height:7px;color:#333;opacity:0.9;left:216px;transform-origin:0 50%;transform:scaleX(1.0131);">Windows</span><svg class="b" style="left:112.5px;top:24.3px;" width="7" height="6" viewBox="0 0 7 6" fill="none"><path d="M0 0.5 H1.6 M2.4 0.7 H6.6 M1.8 2.9 H6.6 M1.8 5.1 H6.6" stroke="#1c1c1c" stroke-width="0.7"/></svg><span class="t" id="t204" style="top:22.3px;font-size:8.6px;line-height:11px;color:#1c1c1c;left:126px;transform-origin:0 50%;transform:scaleX(0.9483);">MILOSG&thinsp;\&thinsp;C:\&thinsp;Program Files</span><span class="t" id="t205" style="top:38.3px;font-size:8.2px;line-height:11px;color:#1c1c1c;left:114px;transform-origin:0 50%;transform:scaleX(1.0006);">Program Files</span><svg class="b" style="left:115px;top:52.3px;" width="50" height="7" viewBox="0 0 50 7" fill="none"><path d="M3 6.6 V0.8 M0.8 3 L3 0.8 L5.2 3 M14.5 3.5 H8.4 M10.8 1.1 L8.4 3.5 L10.8 5.9 M18 3.5 H24.2 M21.8 1.1 L24.2 3.5 L21.8 5.9 M27.4 0.8 H29.6 L30.4 1.8 H34 V6.2 H27.4Z" stroke="#333" stroke-width="0.7" opacity="0.9"/><path d="M37.4 4.6 L39.4 2.6 L41.4 4.6" stroke="#333" stroke-width="0.9"/><path d="M44.4 2.6 L46.4 4.6 L48.4 2.6" stroke="#b8b8b8" stroke-width="0.7"/></svg><svg class="b" style="left:230px;top:53.3px;" width="14" height="5" viewBox="0 0 14 5" fill="none"><path d="M0.6 3.6 L2.8 1.4 L5 3.6 M8.4 1.4 L10.6 3.6 L12.8 1.4" stroke="#b8b8b8" stroke-width="0.7"/></svg><div class="b" style="left:113px;top:76.45px;width:137px;height:10.9px;background:#86bdea;border-radius:1px 0 0 1px;"></div><div class="b" style="left:113px;top:87.35px;width:137px;height:10.9px;background:#d6d6d6;border-radius:1px 0 0 1px;"></div><div class="b" style="left:117px;top:67.8px;width:4.6px;height:6.2px;background:#f5c542;border-radius:0.6px;box-shadow:inset -1px 0 0 rgba(255,255,255,.35);"></div><span class="t" id="t206" style="top:67.5px;font-size:5.6px;line-height:7px;color:#222;opacity:0.9;left:126px;transform-origin:0 50%;">3DF Zephyr Free</span><div class="b" style="left:117px;top:78.7px;width:4.6px;height:6.2px;background:#f5c542;border-radius:0.6px;box-shadow:inset -1px 0 0 rgba(255,255,255,.35);"></div><span class="t" id="t207" style="top:78.4px;font-size:5.6px;line-height:7px;color:#222;opacity:0.9;left:126px;transform-origin:0 50%;">7-Zip</span><div class="b" style="left:117px;top:89.6px;width:4.6px;height:6.2px;background:#f5c542;border-radius:0.6px;box-shadow:inset -1px 0 0 rgba(255,255,255,.35);"></div><span class="t" id="t208" style="top:89.3px;font-size:5.6px;line-height:7px;color:#222;opacity:0.9;left:126px;transform-origin:0 50%;">ACD Systems</span><div class="b" style="left:117px;top:100.5px;width:4.6px;height:6.2px;background:#f5c542;border-radius:0.6px;box-shadow:inset -1px 0 0 rgba(255,255,255,.35);"></div><span class="t" id="t209" style="top:100.2px;font-size:5.6px;line-height:7px;color:#222;opacity:0.9;left:126px;transform-origin:0 50%;">Adobe</span><div class="b" style="left:0;top:0;width:250px;height:106px;border:1px solid rgba(200,210,220,.9);"></div></div><span class="t" id="t210" style="top:470.0px;font-size:14px;line-height:18px;color:#ffffff;left:176.5px;transform-origin:0 50%;transform:scaleX(1.0355);">MinimalWhite</span><div class="th" style="left:296px;top:468.9px;height:106px;"><div class="b" style="left:0px;top:0px;width:111px;height:107px;background:#ffffff;"></div><div class="b" style="left:110px;top:0px;width:140px;height:107px;background:#f4f5f7;"></div><div class="b" style="left:0px;top:0px;width:250px;height:17px;background:#e4e4e4;"></div><span class="t" id="t211" style="top:7.0px;font-size:5.6px;line-height:7px;color:#333;opacity:0.85;left:8px;transform-origin:0 50%;transform:scaleX(0.9894);">One Commander 3.0.18.0</span><div class="b" style="left:7px;top:17px;width:93px;height:56px;background:#ffffff;border-radius:2.5px;"></div><span class="t" id="t212" style="top:21.5px;font-size:7.2px;line-height:9px;color:#222;left:12px;transform-origin:0 50%;transform:scaleX(1.0307);">Drives</span><span class="t" id="t213" style="top:19.5px;font-size:7px;line-height:9px;color:#222;opacity:0.8;left:85px;transform-origin:0 50%;transform:scaleX(1.0000);">···</span><div class="b" style="left:14px;top:37px;width:6px;height:3px;background:#58b7ea;border-radius:1px;"></div><div class="b" style="left:15px;top:56px;width:5.5px;height:3px;background:#c9ccd2;border-radius:1px;"></div><span class="t" id="t214" style="top:34.5px;font-size:5.4px;line-height:7px;color:#222;font-weight:700;left:22px;transform-origin:0 50%;transform:scaleX(0.9644);">C:</span><span class="t" id="t215" style="top:42.5px;font-size:5px;line-height:6px;color:#444;opacity:0.85;left:22px;transform-origin:0 50%;transform:scaleX(0.7988);">96%</span><span class="t" id="t216" style="top:42.5px;font-size:5px;line-height:6px;color:#444;opacity:0.85;right:calc(100% - 92px);transform-origin:100% 50%;">35 GB</span><span class="t" id="t217" style="top:53.5px;font-size:5.4px;line-height:7px;color:#222;font-weight:700;left:22px;transform-origin:0 50%;transform:scaleX(0.9644);">D:</span><span class="t" id="t218" style="top:54.0px;font-size:5px;line-height:6px;color:#444;opacity:0.8;left:34px;transform-origin:0 50%;transform:scaleX(0.9529);">DATA</span><span class="t" id="t219" style="top:61.5px;font-size:5px;line-height:6px;color:#444;opacity:0.85;left:22px;transform-origin:0 50%;transform:scaleX(0.7988);">90%</span><span class="t" id="t220" style="top:61.5px;font-size:5px;line-height:6px;color:#444;opacity:0.85;right:calc(100% - 92px);transform-origin:100% 50%;">15 GB</span><div class="b" style="left:7px;top:75px;width:93px;height:40px;background:#ffffff;border-radius:2.5px;"></div><span class="t" id="t221" style="top:79.5px;font-size:7.2px;line-height:9px;color:#222;left:12px;transform-origin:0 50%;transform:scaleX(1.0726);">milos</span><span class="t" id="t222" style="top:77.5px;font-size:7px;line-height:9px;color:#222;opacity:0.6;left:71px;transform-origin:0 50%;transform:scaleX(1.0000);">···</span><span class="t" id="t223" style="top:78.0px;font-size:9px;line-height:12px;color:#222;opacity:0.9;left:87px;transform-origin:0 50%;transform:scaleX(1.1395);">+</span><div class="b" style="left:14px;top:94.8px;width:4.6px;height:4px;border:0.7px solid #222;opacity:.8;"></div><span class="t" id="t224" style="top:93.8px;font-size:5.4px;line-height:7px;color:#222;opacity:0.85;left:22px;transform-origin:0 50%;transform:scaleX(0.8346);">This PC</span><div class="b" style="left:204px;top:0px;width:46px;height:17px;background:#e2e2e2;"></div><div class="b" style="left:110px;top:0px;width:94px;height:17px;background:#f4f4f4;"></div><div class="b" style="left:115px;top:7.3px;width:4.6px;height:6.2px;background:#f5c542;border-radius:0.6px;box-shadow:inset -1px 0 0 rgba(255,255,255,.35);"></div><span class="t" id="t225" style="top:7.0px;font-size:5.6px;line-height:7px;color:#333;opacity:0.9;left:122px;transform-origin:0 50%;transform:scaleX(0.9762);">Program Files</span><div class="b" style="left:209px;top:7.3px;width:4.6px;height:6.2px;background:#f5c542;border-radius:0.6px;box-shadow:inset -1px 0 0 rgba(255,255,255,.35);"></div><span class="t" id="t226" style="top:7.0px;font-size:5.6px;line-height:7px;color:#333;opacity:0.9;left:216px;transform-origin:0 50%;transform:scaleX(1.0131);">Windows</span><svg class="b" style="left:112.5px;top:23.9px;" width="7" height="6" viewBox="0 0 7 6" fill="none"><path d="M0 0.5 H1.6 M2.4 0.7 H6.6 M1.8 2.9 H6.6 M1.8 5.1 H6.6" stroke="#1c1c1c" stroke-width="0.7"/></svg><span class="t" id="t227" style="top:21.9px;font-size:8.6px;line-height:11px;color:#1c1c1c;left:126px;transform-origin:0 50%;transform:scaleX(0.9483);">MILOSG&thinsp;\&thinsp;C:\&thinsp;Program Files</span><span class="t" id="t228" style="top:37.9px;font-size:8.2px;line-height:11px;color:#1c1c1c;left:114px;transform-origin:0 50%;transform:scaleX(1.0006);">Program Files</span><svg class="b" style="left:115px;top:51.9px;" width="50" height="7" viewBox="0 0 50 7" fill="none"><path d="M3 6.6 V0.8 M0.8 3 L3 0.8 L5.2 3 M14.5 3.5 H8.4 M10.8 1.1 L8.4 3.5 L10.8 5.9 M18 3.5 H24.2 M21.8 1.1 L24.2 3.5 L21.8 5.9 M27.4 0.8 H29.6 L30.4 1.8 H34 V6.2 H27.4Z" stroke="#222" stroke-width="0.7" opacity="0.9"/><path d="M37.4 4.6 L39.4 2.6 L41.4 4.6" stroke="#222" stroke-width="0.9"/><path d="M44.4 2.6 L46.4 4.6 L48.4 2.6" stroke="#c4c4c4" stroke-width="0.7"/></svg><svg class="b" style="left:230px;top:52.9px;" width="14" height="5" viewBox="0 0 14 5" fill="none"><path d="M0.6 3.6 L2.8 1.4 L5 3.6 M8.4 1.4 L10.6 3.6 L12.8 1.4" stroke="#c4c4c4" stroke-width="0.7"/></svg><div class="b" style="left:113px;top:75.95px;width:137px;height:10.9px;background:#b5c5da;border-radius:1px 0 0 1px;"></div><div class="b" style="left:113px;top:86.85px;width:137px;height:10.9px;background:#d9d9d9;border-radius:1px 0 0 1px;"></div><div class="b" style="left:117px;top:67.3px;width:4.6px;height:6.2px;background:#f5c542;border-radius:0.6px;box-shadow:inset -1px 0 0 rgba(255,255,255,.35);"></div><span class="t" id="t229" style="top:67.0px;font-size:5.6px;line-height:7px;color:#222;opacity:0.9;left:126px;transform-origin:0 50%;">3DF Zephyr Free</span><div class="b" style="left:117px;top:78.2px;width:4.6px;height:6.2px;background:#f5c542;border-radius:0.6px;box-shadow:inset -1px 0 0 rgba(255,255,255,.35);"></div><span class="t" id="t230" style="top:77.9px;font-size:5.6px;line-height:7px;color:#222;opacity:0.9;left:126px;transform-origin:0 50%;">7-Zip</span><div class="b" style="left:117px;top:89.1px;width:4.6px;height:6.2px;background:#f5c542;border-radius:0.6px;box-shadow:inset -1px 0 0 rgba(255,255,255,.35);"></div><span class="t" id="t231" style="top:88.8px;font-size:5.6px;line-height:7px;color:#222;opacity:0.9;left:126px;transform-origin:0 50%;">ACD Systems</span><div class="b" style="left:117px;top:100.0px;width:4.6px;height:6.2px;background:#f5c542;border-radius:0.6px;box-shadow:inset -1px 0 0 rgba(255,255,255,.35);"></div><span class="t" id="t232" style="top:99.7px;font-size:5.6px;line-height:7px;color:#222;opacity:0.9;left:126px;transform-origin:0 50%;">Adobe</span><div class="b" style="left:0;top:0;width:250px;height:106px;border:1px solid rgba(170,180,195,.9);"></div></div><span class="t" id="t233" style="top:599.3px;font-size:14px;line-height:18px;color:#ffffff;left:176.5px;transform-origin:0 50%;transform:scaleX(1.0540);">Nord</span><div class="th" style="left:296px;top:598.2px;height:106px;"><div class="b" style="left:0px;top:0px;width:111px;height:107px;background:linear-gradient(120deg,#2b5a7c 0%,#2e4d68 60%,#2f4560 100%);"></div><div class="b" style="left:110px;top:0px;width:140px;height:107px;background:#3b4253;"></div><span class="t" id="t234" style="top:5.5px;font-size:5.6px;line-height:7px;color:#dfe7ee;opacity:0.85;left:8px;transform-origin:0 50%;transform:scaleX(0.9692);">One Commander v3 β.555</span><div class="b" style="left:7px;top:18px;width:93px;height:56px;background:#2f3a4d;border-radius:2.5px;"></div><div class="b" style="left:12px;top:35px;width:84px;height:35px;background:#364258;border-radius:2px;"></div><span class="t" id="t235" style="top:22.5px;font-size:7.2px;line-height:9px;color:#dfe6ee;left:12px;transform-origin:0 50%;transform:scaleX(1.0307);">Drives</span><span class="t" id="t236" style="top:20.5px;font-size:7px;line-height:9px;color:#dfe6ee;opacity:0.8;left:85px;transform-origin:0 50%;transform:scaleX(1.0000);">···</span><div class="b" style="left:14px;top:38px;width:6px;height:3px;background:#58b7ea;border-radius:1px;"></div><div class="b" style="left:15px;top:57px;width:5.5px;height:3px;background:#c9ccd2;border-radius:1px;"></div><span class="t" id="t237" style="top:35.5px;font-size:5.4px;line-height:7px;color:#dfe6ee;font-weight:700;left:22px;transform-origin:0 50%;transform:scaleX(0.9644);">C:</span><span class="t" id="t238" style="top:43.5px;font-size:5px;line-height:6px;color:#d0d8e0;opacity:0.85;left:22px;transform-origin:0 50%;transform:scaleX(0.7988);">82%</span><span class="t" id="t239" style="top:43.5px;font-size:5px;line-height:6px;color:#d0d8e0;opacity:0.85;right:calc(100% - 92px);transform-origin:100% 50%;">175 / 969 GB</span><span class="t" id="t240" style="top:54.5px;font-size:5.4px;line-height:7px;color:#dfe6ee;font-weight:700;left:22px;transform-origin:0 50%;transform:scaleX(0.9644);">D:</span><span class="t" id="t241" style="top:55.0px;font-size:5px;line-height:6px;color:#d0d8e0;opacity:0.8;left:34px;transform-origin:0 50%;transform:scaleX(0.9529);">DATA</span><span class="t" id="t242" style="top:62.5px;font-size:5px;line-height:6px;color:#d0d8e0;opacity:0.85;left:22px;transform-origin:0 50%;transform:scaleX(0.7988);">85%</span><span class="t" id="t243" style="top:62.5px;font-size:5px;line-height:6px;color:#d0d8e0;opacity:0.85;right:calc(100% - 92px);transform-origin:100% 50%;">161 / 1074 GB</span><div class="b" style="left:7px;top:80px;width:93px;height:40px;background:#2f3a4d;border-radius:2.5px;"></div><div class="b" style="left:12px;top:97px;width:84px;height:20px;background:#364258;border-radius:2px;"></div><span class="t" id="t244" style="top:84.5px;font-size:7.2px;line-height:9px;color:#dfe6ee;left:12px;transform-origin:0 50%;transform:scaleX(1.0726);">milos</span><span class="t" id="t245" style="top:82.5px;font-size:7px;line-height:9px;color:#dfe6ee;opacity:0.6;left:71px;transform-origin:0 50%;transform:scaleX(1.0000);">···</span><span class="t" id="t246" style="top:83.0px;font-size:9px;line-height:12px;color:#dfe6ee;opacity:0.9;left:87px;transform-origin:0 50%;transform:scaleX(1.1395);">+</span><div class="b" style="left:14px;top:98.5px;width:4.6px;height:4px;border:0.7px solid #dfe6ee;opacity:.8;"></div><span class="t" id="t247" style="top:97.5px;font-size:5.4px;line-height:7px;color:#dfe6ee;opacity:0.85;left:22px;transform-origin:0 50%;transform:scaleX(0.8346);">This PC</span><div class="b" style="left:204px;top:0px;width:46px;height:17px;background:#2f3544;"></div><div class="b" style="left:110px;top:0px;width:94px;height:17px;background:#3b4253;"></div><div class="b" style="left:115px;top:7.3px;width:4.6px;height:6.2px;background:#f5c542;border-radius:0.6px;box-shadow:inset -1px 0 0 rgba(255,255,255,.35);"></div><span class="t" id="t248" style="top:7.0px;font-size:5.6px;line-height:7px;color:#e2e6ec;opacity:0.9;left:122px;transform-origin:0 50%;transform:scaleX(0.9762);">Program Files</span><div class="b" style="left:209px;top:7.3px;width:4.6px;height:6.2px;background:#f5c542;border-radius:0.6px;box-shadow:inset -1px 0 0 rgba(255,255,255,.35);"></div><span class="t" id="t249" style="top:7.0px;font-size:5.6px;line-height:7px;color:#e2e6ec;opacity:0.9;left:216px;transform-origin:0 50%;transform:scaleX(1.0131);">Windows</span><div class="b" style="left:110px;top:18px;width:140px;height:13px;background:#333a4a;"></div><svg class="b" style="left:112.5px;top:21.5px;" width="7" height="6" viewBox="0 0 7 6" fill="none"><path d="M0 0.5 H1.6 M2.4 0.7 H6.6 M1.8 2.9 H6.6 M1.8 5.1 H6.6" stroke="#a9c7d8" stroke-width="0.7"/></svg><span class="t" id="t250" style="top:19.5px;font-size:8.6px;line-height:11px;color:#a9c7d8;left:126px;transform-origin:0 50%;transform:scaleX(0.9483);">MILOSG&thinsp;\&thinsp;C:\&thinsp;Program Files</span><span class="t" id="t251" style="top:35.5px;font-size:8.2px;line-height:11px;color:#a9c7d8;left:114px;transform-origin:0 50%;transform:scaleX(1.0006);">Program Files</span><svg class="b" style="left:115px;top:49.5px;" width="50" height="7" viewBox="0 0 50 7" fill="none"><path d="M3 6.6 V0.8 M0.8 3 L3 0.8 L5.2 3 M14.5 3.5 H8.4 M10.8 1.1 L8.4 3.5 L10.8 5.9 M18 3.5 H24.2 M21.8 1.1 L24.2 3.5 L21.8 5.9 M27.4 0.8 H29.6 L30.4 1.8 H34 V6.2 H27.4Z" stroke="#e0e4ea" stroke-width="0.7" opacity="0.9"/><path d="M37.4 4.6 L39.4 2.6 L41.4 4.6" stroke="#e0e4ea" stroke-width="0.9"/><path d="M44.4 2.6 L46.4 4.6 L48.4 2.6" stroke="#59627a" stroke-width="0.7"/></svg><svg class="b" style="left:230px;top:50.5px;" width="14" height="5" viewBox="0 0 14 5" fill="none"><path d="M0.6 3.6 L2.8 1.4 L5 3.6 M8.4 1.4 L10.6 3.6 L12.8 1.4" stroke="#59627a" stroke-width="0.7"/></svg><div class="b" style="left:113px;top:72.4px;width:137px;height:9.8px;background:#4d6283;border-radius:1px 0 0 1px;"></div><div class="b" style="left:113px;top:82.2px;width:137px;height:9.8px;background:#444c60;border-radius:1px 0 0 1px;"></div><div class="b" style="left:117px;top:64.3px;width:4.6px;height:6.2px;background:#f5c542;border-radius:0.6px;box-shadow:inset -1px 0 0 rgba(255,255,255,.35);"></div><span class="t" id="t252" style="top:64.0px;font-size:5.6px;line-height:7px;color:#e8ecf2;opacity:0.9;left:126px;transform-origin:0 50%;">3DF Zephyr Free</span><span class="t" id="t253" style="top:64.0px;font-size:5.4px;line-height:7px;color:#cfd6e0;opacity:0.9;right:calc(100% - 243px);transform-origin:100% 50%;transform:scaleX(1.0178);">[DIR]</span><div class="b" style="left:117px;top:74.1px;width:4.6px;height:6.2px;background:#f5c542;border-radius:0.6px;box-shadow:inset -1px 0 0 rgba(255,255,255,.35);"></div><span class="t" id="t254" style="top:73.8px;font-size:5.6px;line-height:7px;color:#e8ecf2;opacity:0.9;left:126px;transform-origin:0 50%;">7-Zip</span><span class="t" id="t255" style="top:73.8px;font-size:5.4px;line-height:7px;color:#cfd6e0;opacity:0.9;right:calc(100% - 243px);transform-origin:100% 50%;transform:scaleX(1.0178);">[DIR]</span><div class="b" style="left:117px;top:83.89999999999999px;width:4.6px;height:6.2px;background:#f5c542;border-radius:0.6px;box-shadow:inset -1px 0 0 rgba(255,255,255,.35);"></div><span class="t" id="t256" style="top:83.6px;font-size:5.6px;line-height:7px;color:#e8ecf2;opacity:0.9;left:126px;transform-origin:0 50%;">Adobe</span><span class="t" id="t257" style="top:83.6px;font-size:5.4px;line-height:7px;color:#cfd6e0;opacity:0.9;right:calc(100% - 243px);transform-origin:100% 50%;transform:scaleX(1.0178);">[DIR]</span><div class="b" style="left:117px;top:93.7px;width:4.6px;height:6.2px;background:#f5c542;border-radius:0.6px;box-shadow:inset -1px 0 0 rgba(255,255,255,.35);"></div><span class="t" id="t258" style="top:93.4px;font-size:5.6px;line-height:7px;color:#e8ecf2;opacity:0.9;left:126px;transform-origin:0 50%;">Android</span><span class="t" id="t259" style="top:93.4px;font-size:5.4px;line-height:7px;color:#cfd6e0;opacity:0.9;right:calc(100% - 243px);transform-origin:100% 50%;transform:scaleX(1.0178);">[DIR]</span><div class="b" style="left:117px;top:103.5px;width:4.6px;height:6.2px;background:#f5c542;border-radius:0.6px;box-shadow:inset -1px 0 0 rgba(255,255,255,.35);"></div><span class="t" id="t260" style="top:103.2px;font-size:5.6px;line-height:7px;color:#e8ecf2;opacity:0.9;left:126px;transform-origin:0 50%;">Application Verifier</span><span class="t" id="t261" style="top:103.2px;font-size:5.4px;line-height:7px;color:#cfd6e0;opacity:0.9;right:calc(100% - 243px);transform-origin:100% 50%;transform:scaleX(1.0178);">[DIR]</span><div class="b" style="left:0;top:0;width:250px;height:106px;border:1px solid rgba(130,150,165,.85);"></div></div><span class="t" id="t262" style="top:728.6px;font-size:14px;line-height:18px;color:#ffffff;left:176.5px;transform-origin:0 50%;transform:scaleX(1.0495);">Nortorn</span><div class="th" style="left:296px;top:727.5px;height:106px;"><div class="b" style="left:0px;top:0px;width:111px;height:107px;background:#000000;"></div><div class="b" style="left:110px;top:0px;width:140px;height:107px;background:#0a0a0a;"></div><span class="t" id="t263" style="top:5.5px;font-size:5.6px;line-height:7px;color:#e8e8e8;opacity:0.85;left:8px;transform-origin:0 50%;transform:scaleX(0.9692);">One Commander v3 β.555</span><div class="b" style="left:7px;top:18px;width:93px;height:56px;background:#101010;border-radius:2.5px;"></div><span class="t" id="t264" style="top:22.5px;font-size:7.2px;line-height:9px;color:#e8e8e8;left:12px;transform-origin:0 50%;transform:scaleX(1.0307);">Drives</span><span class="t" id="t265" style="top:20.5px;font-size:7px;line-height:9px;color:#e8e8e8;opacity:0.8;left:85px;transform-origin:0 50%;transform:scaleX(1.0000);">···</span><div class="b" style="left:14px;top:38px;width:6px;height:3px;background:#58b7ea;border-radius:1px;"></div><div class="b" style="left:15px;top:57px;width:5.5px;height:3px;background:#c9ccd2;border-radius:1px;"></div><span class="t" id="t266" style="top:35.5px;font-size:5.4px;line-height:7px;color:#e8e8e8;font-weight:700;left:22px;transform-origin:0 50%;transform:scaleX(0.9644);">C:</span><span class="t" id="t267" style="top:43.5px;font-size:5px;line-height:6px;color:#c8c8c8;opacity:0.85;left:22px;transform-origin:0 50%;transform:scaleX(0.7988);">19%</span><span class="t" id="t268" style="top:43.5px;font-size:5px;line-height:6px;color:#c8c8c8;opacity:0.85;right:calc(100% - 92px);transform-origin:100% 50%;">175 / 969 GB</span><span class="t" id="t269" style="top:54.5px;font-size:5.4px;line-height:7px;color:#e8e8e8;font-weight:700;left:22px;transform-origin:0 50%;transform:scaleX(0.9644);">D:</span><span class="t" id="t270" style="top:55.0px;font-size:5px;line-height:6px;color:#c8c8c8;opacity:0.8;left:34px;transform-origin:0 50%;transform:scaleX(0.9529);">DATA</span><span class="t" id="t271" style="top:62.5px;font-size:5px;line-height:6px;color:#c8c8c8;opacity:0.85;left:22px;transform-origin:0 50%;transform:scaleX(0.7988);">15%</span><span class="t" id="t272" style="top:62.5px;font-size:5px;line-height:6px;color:#c8c8c8;opacity:0.85;right:calc(100% - 92px);transform-origin:100% 50%;">161 / 1074 GB</span><div class="b" style="left:7px;top:80px;width:93px;height:40px;background:#101010;border-radius:2.5px;"></div><span class="t" id="t273" style="top:84.5px;font-size:7.2px;line-height:9px;color:#e8e8e8;left:12px;transform-origin:0 50%;transform:scaleX(1.0726);">milos</span><span class="t" id="t274" style="top:82.5px;font-size:7px;line-height:9px;color:#e8e8e8;opacity:0.6;left:71px;transform-origin:0 50%;transform:scaleX(1.0000);">···</span><span class="t" id="t275" style="top:83.0px;font-size:9px;line-height:12px;color:#e8e8e8;opacity:0.9;left:87px;transform-origin:0 50%;transform:scaleX(1.1395);">+</span><div class="b" style="left:14px;top:98.5px;width:4.6px;height:4px;border:0.7px solid #e8e8e8;opacity:.8;"></div><span class="t" id="t276" style="top:97.5px;font-size:5.4px;line-height:7px;color:#e8e8e8;opacity:0.85;left:22px;transform-origin:0 50%;transform:scaleX(0.8346);">This PC</span><div class="b" style="left:204px;top:0px;width:46px;height:17px;background:#000000;"></div><div class="b" style="left:110px;top:0px;width:94px;height:17px;background:#1a8f8f;"></div><div class="b" style="left:115px;top:7.3px;width:4.6px;height:6.2px;background:#f5c542;border-radius:0.6px;box-shadow:inset -1px 0 0 rgba(255,255,255,.35);"></div><span class="t" id="t277" style="top:7.0px;font-size:5.6px;line-height:7px;color:#f0f0f0;opacity:0.9;left:122px;transform-origin:0 50%;transform:scaleX(0.9762);">Program Files</span><div class="b" style="left:209px;top:7.3px;width:4.6px;height:6.2px;background:#f5c542;border-radius:0.6px;box-shadow:inset -1px 0 0 rgba(255,255,255,.35);"></div><span class="t" id="t278" style="top:7.0px;font-size:5.6px;line-height:7px;color:#f0f0f0;opacity:0.9;left:216px;transform-origin:0 50%;transform:scaleX(1.0131);">Windows</span><svg class="b" style="left:112.5px;top:21.5px;" width="7" height="6" viewBox="0 0 7 6" fill="none"><path d="M0 0.5 H1.6 M2.4 0.7 H6.6 M1.8 2.9 H6.6 M1.8 5.1 H6.6" stroke="#f0f0f0" stroke-width="0.7"/></svg><span class="t" id="t279" style="top:19.5px;font-size:8.6px;line-height:11px;color:#f0f0f0;left:126px;transform-origin:0 50%;transform:scaleX(0.9483);">MILOSG&thinsp;\&thinsp;C:\&thinsp;Program Files</span><span class="t" id="t280" style="top:35.5px;font-size:8.2px;line-height:11px;color:#f0f0f0;left:114px;transform-origin:0 50%;transform:scaleX(1.0006);">Program Files</span><svg class="b" style="left:115px;top:49.5px;" width="50" height="7" viewBox="0 0 50 7" fill="none"><path d="M3 6.6 V0.8 M0.8 3 L3 0.8 L5.2 3 M14.5 3.5 H8.4 M10.8 1.1 L8.4 3.5 L10.8 5.9 M18 3.5 H24.2 M21.8 1.1 L24.2 3.5 L21.8 5.9 M27.4 0.8 H29.6 L30.4 1.8 H34 V6.2 H27.4Z" stroke="#e0e0e0" stroke-width="0.7" opacity="0.9"/><path d="M37.4 4.6 L39.4 2.6 L41.4 4.6" stroke="#e0e0e0" stroke-width="0.9"/><path d="M44.4 2.6 L46.4 4.6 L48.4 2.6" stroke="#555" stroke-width="0.7"/></svg><svg class="b" style="left:230px;top:50.5px;" width="14" height="5" viewBox="0 0 14 5" fill="none"><path d="M0.6 3.6 L2.8 1.4 L5 3.6 M8.4 1.4 L10.6 3.6 L12.8 1.4" stroke="#555" stroke-width="0.7"/></svg><div class="b" style="left:113px;top:72.4px;width:137px;height:9.8px;background:#1a8f8f;border-radius:1px 0 0 1px;"></div><div class="b" style="left:113px;top:82.2px;width:137px;height:9.8px;background:#222;border-radius:1px 0 0 1px;"></div><div class="b" style="left:117px;top:64.3px;width:4.6px;height:6.2px;background:#f5c542;border-radius:0.6px;box-shadow:inset -1px 0 0 rgba(255,255,255,.35);"></div><span class="t" id="t281" style="top:64.0px;font-size:5.6px;line-height:7px;color:#e6e6e6;opacity:0.9;left:126px;transform-origin:0 50%;">3DF Zephyr Free</span><span class="t" id="t282" style="top:64.0px;font-size:5.4px;line-height:7px;color:#d8d8d8;opacity:0.9;right:calc(100% - 243px);transform-origin:100% 50%;transform:scaleX(1.0178);">[DIR]</span><div class="b" style="left:117px;top:74.1px;width:4.6px;height:6.2px;background:#f5c542;border-radius:0.6px;box-shadow:inset -1px 0 0 rgba(255,255,255,.35);"></div><span class="t" id="t283" style="top:73.8px;font-size:5.6px;line-height:7px;color:#e6e6e6;opacity:0.9;left:126px;transform-origin:0 50%;">7-Zip</span><span class="t" id="t284" style="top:73.8px;font-size:5.4px;line-height:7px;color:#d8d8d8;opacity:0.9;right:calc(100% - 243px);transform-origin:100% 50%;transform:scaleX(1.0178);">[DIR]</span><div class="b" style="left:117px;top:83.89999999999999px;width:4.6px;height:6.2px;background:#f5c542;border-radius:0.6px;box-shadow:inset -1px 0 0 rgba(255,255,255,.35);"></div><span class="t" id="t285" style="top:83.6px;font-size:5.6px;line-height:7px;color:#e6e6e6;opacity:0.9;left:126px;transform-origin:0 50%;">Adobe</span><span class="t" id="t286" style="top:83.6px;font-size:5.4px;line-height:7px;color:#d8d8d8;opacity:0.9;right:calc(100% - 243px);transform-origin:100% 50%;transform:scaleX(1.0178);">[DIR]</span><div class="b" style="left:117px;top:93.7px;width:4.6px;height:6.2px;background:#f5c542;border-radius:0.6px;box-shadow:inset -1px 0 0 rgba(255,255,255,.35);"></div><span class="t" id="t287" style="top:93.4px;font-size:5.6px;line-height:7px;color:#e6e6e6;opacity:0.9;left:126px;transform-origin:0 50%;">Android</span><span class="t" id="t288" style="top:93.4px;font-size:5.4px;line-height:7px;color:#d8d8d8;opacity:0.9;right:calc(100% - 243px);transform-origin:100% 50%;transform:scaleX(1.0178);">[DIR]</span><div class="b" style="left:117px;top:103.5px;width:4.6px;height:6.2px;background:#f5c542;border-radius:0.6px;box-shadow:inset -1px 0 0 rgba(255,255,255,.35);"></div><span class="t" id="t289" style="top:103.2px;font-size:5.6px;line-height:7px;color:#e6e6e6;opacity:0.9;left:126px;transform-origin:0 50%;">Application Verifier</span><span class="t" id="t290" style="top:103.2px;font-size:5.4px;line-height:7px;color:#d8d8d8;opacity:0.9;right:calc(100% - 243px);transform-origin:100% 50%;transform:scaleX(1.0178);">[DIR]</span><div class="b" style="left:0;top:0;width:250px;height:106px;border:1px solid rgba(130,130,130,.8);"></div></div><svg class="b" style="left:552px;top:199px;" width="9" height="7" viewBox="0 0 9 7" fill="none"><path d="M1.2 5.2 L4.5 2 L7.8 5.2" stroke="#4f86b6" stroke-width="1"/></svg><div class="b" style="left:554px;top:211px;width:4px;height:118px;background:#5e88ab;border-radius:2px 2px 0 0;"></div><div class="b" style="left:554px;top:329px;width:4px;height:420px;background:#6b6b6b;"></div></div>
</body></html>
